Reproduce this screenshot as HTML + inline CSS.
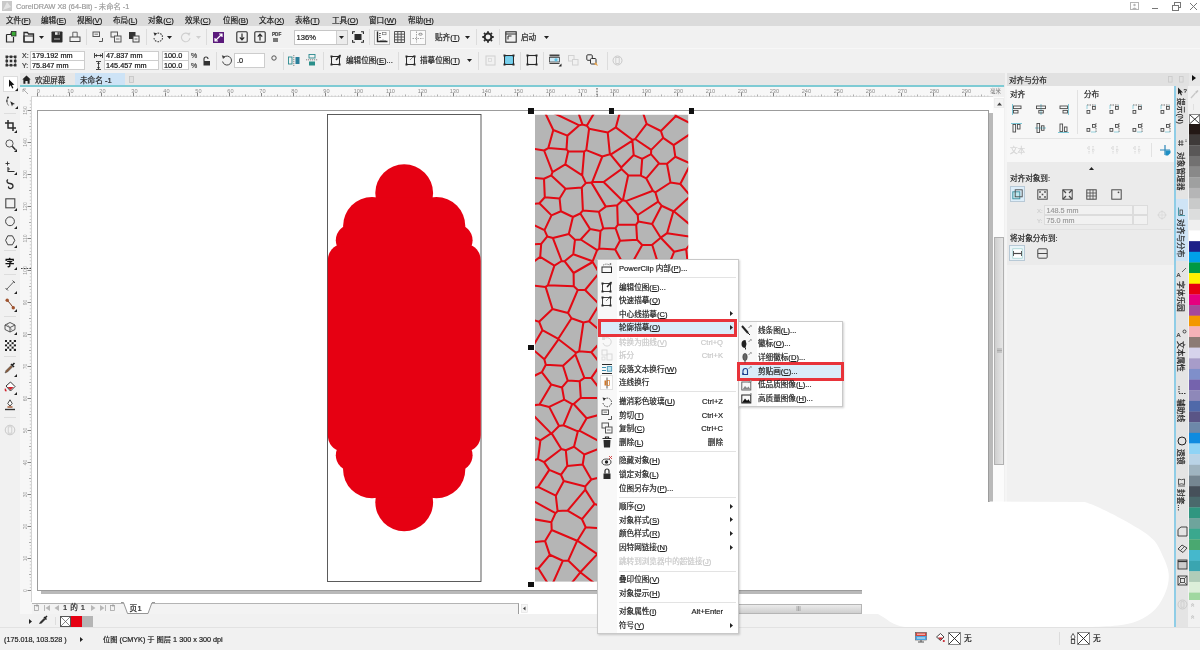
<!DOCTYPE html>
<html lang="zh-CN"><head><meta charset="utf-8"><title>CorelDRAW X8 (64-Bit) - 未命名 -1</title>
<style>
html,body{margin:0;padding:0;}
body{width:1200px;height:650px;overflow:hidden;position:relative;background:#f0f0f0;font-family:"Liberation Sans","Noto Sans CJK SC",sans-serif;}
#root{position:absolute;left:0;top:0;width:1200px;height:650px;overflow:hidden;will-change:transform;}
#root div,#root span.t,#root svg{position:absolute;}
#root div{box-sizing:border-box;}
span.t{white-space:nowrap;letter-spacing:0;-webkit-text-stroke:0.2px;}
u{text-decoration:underline;text-underline-offset:0.6px;text-decoration-thickness:0.5px;}
</style></head><body><div id="root">
<div style="left:0px;top:0px;width:1200px;height:13px;background:#ffffff;"></div>
<svg style="left:2px;top:1px;" width="10" height="10" viewBox="0 0 10 10"><rect x="0" y="0" width="10" height="10" fill="#c9c9c9"/><path d="M1 9 L5 1 L9 6 Z" fill="#e4e4e4"/></svg>
<span class="t" style="left:16px;top:1.00px;font-size:7.3px;line-height:12px;color:#9b9b9b;">CorelDRAW X8 (64-Bit) - 未命名 -1</span>
<svg style="left:1130px;top:2px;" width="10" height="9" viewBox="0 0 10 9"><rect x="0.5" y="0.5" width="8" height="7" fill="none" stroke="#b5b5b5"/><circle cx="4.5" cy="3" r="1.2" fill="#b5b5b5"/><path d="M2 7 Q4.5 4 7 7" fill="#b5b5b5"/></svg>
<div style="left:1152px;top:8px;width:6px;height:1px;background:#777;"></div>
<svg style="left:1172px;top:2px;" width="10" height="10" viewBox="0 0 10 10"><rect x="2.5" y="0.5" width="6" height="5" fill="none" stroke="#777"/><rect x="0.5" y="3.5" width="6" height="5" fill="#fff" stroke="#777"/></svg>
<svg style="left:1189px;top:2px;" width="9" height="9" viewBox="0 0 9 9"><path d="M1 1 L8 8 M8 1 L1 8" stroke="#777" stroke-width="1"/></svg>
<div style="left:0px;top:13px;width:1200px;height:13px;background:#dbdbdb;"></div>
<span class="t" style="left:6px;top:14.70px;font-size:7.6px;line-height:12px;color:#1e1e1e;">文件(<u>F</u>)</span>
<span class="t" style="left:41px;top:14.70px;font-size:7.6px;line-height:12px;color:#1e1e1e;">编辑(<u>E</u>)</span>
<span class="t" style="left:77px;top:14.70px;font-size:7.6px;line-height:12px;color:#1e1e1e;">视图(<u>V</u>)</span>
<span class="t" style="left:113px;top:14.70px;font-size:7.6px;line-height:12px;color:#1e1e1e;">布局(<u>L</u>)</span>
<span class="t" style="left:148px;top:14.70px;font-size:7.6px;line-height:12px;color:#1e1e1e;">对象(<u>C</u>)</span>
<span class="t" style="left:185px;top:14.70px;font-size:7.6px;line-height:12px;color:#1e1e1e;">效果(<u>C</u>)</span>
<span class="t" style="left:223px;top:14.70px;font-size:7.6px;line-height:12px;color:#1e1e1e;">位图(<u>B</u>)</span>
<span class="t" style="left:259px;top:14.70px;font-size:7.6px;line-height:12px;color:#1e1e1e;">文本(<u>X</u>)</span>
<span class="t" style="left:295px;top:14.70px;font-size:7.6px;line-height:12px;color:#1e1e1e;">表格(<u>T</u>)</span>
<span class="t" style="left:332px;top:14.70px;font-size:7.6px;line-height:12px;color:#1e1e1e;">工具(<u>O</u>)</span>
<span class="t" style="left:369px;top:14.70px;font-size:7.6px;line-height:12px;color:#1e1e1e;">窗口(<u>W</u>)</span>
<span class="t" style="left:408px;top:14.70px;font-size:7.6px;line-height:12px;color:#1e1e1e;">帮助(<u>H</u>)</span>
<div style="left:0px;top:26px;width:1200px;height:22px;background:#f1f1f1;"></div>
<div style="left:0px;top:48px;width:1200px;height:25px;background:#f1f1f1;"></div>
<svg style="left:5px;top:31px;" width="12" height="12" viewBox="0 0 12 12"><path d="M1.5 3.5 H6 V1.5 M1.5 3.5 V11 H8.5 V6" fill="none" stroke="#2b2b2b" stroke-width="1.2"/><rect x="6.5" y="0.5" width="4.5" height="4.5" fill="#3aaa35" stroke="#2b2b2b" stroke-width="0.8"/></svg>
<svg style="left:23px;top:31px;" width="12" height="12" viewBox="0 0 12 12"><path d="M1 11 V1.5 H4.5 L5.5 3 H10.5 V11 Z" fill="none" stroke="#2b2b2b" stroke-width="1.3"/><path d="M1 11 V5 H10.5" fill="none" stroke="#2b2b2b" stroke-width="1.1"/></svg>
<svg style="left:38.5px;top:35.5px;" width="5" height="3" viewBox="0 0 5 3"><path d="M0 0 H5 L2.5 3 Z" fill="#222"/></svg>
<svg style="left:51px;top:31px;" width="12" height="12" viewBox="0 0 12 12"><rect x="0.5" y="0.5" width="11" height="11" rx="0.8" fill="#2b2b2b"/><rect x="4" y="1.2" width="4.5" height="2.6" fill="#e8e8e8"/><rect x="6.6" y="1.2" width="1.2" height="2.6" fill="#2b2b2b"/><rect x="3" y="7.5" width="6" height="1" fill="#bdbdbd"/></svg>
<svg style="left:69px;top:31px;" width="12" height="12" viewBox="0 0 12 12"><path d="M3.8 6 V1.2 H8.2 V6" fill="none" stroke="#555" stroke-width="0.9"/><rect x="1" y="6" width="10" height="4.5" fill="none" stroke="#444" stroke-width="1"/></svg>
<div style="left:86px;top:29px;width:1px;height:16px;background:#dcdcdc;"></div>
<svg style="left:92px;top:31px;" width="12" height="12" viewBox="0 0 12 12"><rect x="1" y="1" width="6.5" height="4.5" fill="none" stroke="#555" stroke-width="1"/><path d="M2.5 3.2 H6" stroke="#555" stroke-width="0.8"/><path d="M7 10.5 H10.5 V7" fill="none" stroke="#555" stroke-width="1"/></svg>
<svg style="left:110px;top:31px;" width="12" height="12" viewBox="0 0 12 12"><rect x="1" y="1" width="6.5" height="5" fill="none" stroke="#555" stroke-width="1"/><rect x="4.5" y="5" width="6.5" height="6" fill="#f1f1f1" stroke="#555" stroke-width="1"/><path d="M6 8 H9.5" stroke="#555" stroke-width="0.8"/></svg>
<svg style="left:128px;top:31px;" width="12" height="12" viewBox="0 0 12 12"><rect x="1" y="1" width="6.5" height="7" fill="#333"/><rect x="5" y="5" width="6" height="6" fill="#f1f1f1" stroke="#444" stroke-width="1"/><path d="M6.5 8 H9.5" stroke="#444" stroke-width="0.8"/></svg>
<div style="left:146px;top:29px;width:1px;height:16px;background:#dcdcdc;"></div>
<svg style="left:152px;top:31px;" width="12" height="12" viewBox="0 0 12 12"><path d="M3.2 3.4 A4.3 4.3 0 1 1 2 7" fill="none" stroke="#444" stroke-width="1.1" stroke-dasharray="1.6 1"/><path d="M1.5 1.5 L5 2.2 L2.8 5 Z" fill="#333"/></svg>
<svg style="left:166.5px;top:35.5px;" width="5" height="3" viewBox="0 0 5 3"><path d="M0 0 H5 L2.5 3 Z" fill="#222"/></svg>
<svg style="left:180px;top:31px;" width="12" height="12" viewBox="0 0 12 12"><path d="M8.8 3.4 A4.3 4.3 0 1 0 10 7" fill="none" stroke="#cfcfcf" stroke-width="1.1"/><path d="M10.5 1.5 L7 2.2 L9.2 5 Z" fill="#cfcfcf"/></svg>
<svg style="left:195.5px;top:35.5px;" width="5" height="3" viewBox="0 0 5 3"><path d="M0 0 H5 L2.5 3 Z" fill="#cfcfcf"/></svg>
<div style="left:206px;top:29px;width:1px;height:16px;background:#dcdcdc;"></div>
<svg style="left:213px;top:32px;" width="11" height="11" viewBox="0 0 11 11"><rect width="11" height="11" fill="#5b1a7c"/><path d="M2 9 L9 2 M6 2 H9 V5 M2 6 V9 H5" stroke="#fff" stroke-width="1.2" fill="none"/></svg>
<svg style="left:236px;top:31px;" width="12" height="12" viewBox="0 0 12 12"><rect x="0.8" y="0.8" width="10.4" height="10.4" rx="1" fill="none" stroke="#2b2b2b" stroke-width="1.1"/><path d="M6 2.5 V8.5 M3.8 6.3 L6 8.8 L8.2 6.3" stroke="#2b2b2b" stroke-width="1.2" fill="none"/></svg>
<svg style="left:254px;top:31px;" width="12" height="12" viewBox="0 0 12 12"><rect x="0.8" y="0.8" width="10.4" height="10.4" rx="1" fill="none" stroke="#2b2b2b" stroke-width="1.1"/><path d="M6 9.5 V3.5 M3.8 5.7 L6 3.2 L8.2 5.7" stroke="#2b2b2b" stroke-width="1.2" fill="none"/></svg>
<span class="t" style="left:272px;top:32.20px;font-size:4.6px;line-height:6px;color:#444;font-weight:bold;">PDF</span>
<div style="left:273px;top:38px;width:5px;height:4px;background:#777;"></div>
<div style="left:294px;top:30px;width:54px;height:15px;background:#fff;border:1px solid #c6c6c6;"></div>
<div style="left:336px;top:31px;width:11px;height:13px;background:#ececec;border-left:1px solid #d0d0d0;"></div>
<span class="t" style="left:296.5px;top:32.20px;font-size:7.6px;line-height:12px;color:#222;">136%</span>
<svg style="left:339.0px;top:36.0px;" width="5" height="3" viewBox="0 0 5 3"><path d="M0 0 H5 L2.5 3 Z" fill="#222"/></svg>
<svg style="left:352px;top:31px;" width="12" height="12" viewBox="0 0 12 12"><rect x="2.5" y="3" width="7" height="6" fill="#2b2b2b"/><path d="M0.6 3 V0.8 H3 M9 0.8 H11.4 V3 M11.4 9 V11.2 H9 M3 11.2 H0.6 V9" fill="none" stroke="#2b2b2b" stroke-width="1.1"/></svg>
<div style="left:369px;top:29px;width:1px;height:16px;background:#dcdcdc;"></div>
<div style="left:374px;top:30px;width:16px;height:15px;background:#fafafa;border:1px solid #bdbdbd;"></div>
<svg style="left:376px;top:31px;" width="12" height="12" viewBox="0 0 12 12"><path d="M1.5 0.5 V10.5 H11.5" fill="none" stroke="#2b2b2b" stroke-width="1.4"/><path d="M3 2.5 H5 M3 4.5 H4.5 M3 6.5 H5 M5 9 V10 M7 8.5 V10 M9 9 V10" stroke="#2b2b2b" stroke-width="0.7"/><rect x="6.5" y="1.5" width="3.5" height="2.2" fill="none" stroke="#777" stroke-width="0.7"/></svg>
<svg style="left:394px;top:31px;" width="11" height="12" viewBox="0 0 11 12"><path d="M0.5 0.5 H10.5 V11.5 H0.5 Z M0.5 3.2 H10.5 M0.5 6 H10.5 M0.5 8.8 H10.5 M3.8 0.5 V11.5 M7.2 0.5 V11.5" fill="none" stroke="#555" stroke-width="1"/></svg>
<div style="left:410px;top:30px;width:16px;height:15px;background:#fafafa;border:1px solid #bdbdbd;"></div>
<svg style="left:412px;top:31px;" width="12" height="12" viewBox="0 0 12 12"><path d="M4.5 0.5 V11.5 M0.5 7.5 H11.5" stroke="#8a8a8a" stroke-width="0.8" stroke-dasharray="1.5 1"/><ellipse cx="8.5" cy="3.2" rx="1.8" ry="1" fill="none" stroke="#666" stroke-width="0.7"/></svg>
<span class="t" style="left:435px;top:32.20px;font-size:7.6px;line-height:12px;color:#222;">贴齐(<u>T</u>)</span>
<svg style="left:464.5px;top:36.0px;" width="5" height="3" viewBox="0 0 5 3"><path d="M0 0 H5 L2.5 3 Z" fill="#222"/></svg>
<div style="left:476px;top:29px;width:1px;height:16px;background:#dcdcdc;"></div>
<svg style="left:482px;top:31px;" width="12" height="12" viewBox="0 0 12 12"><circle cx="6" cy="6" r="3.4" fill="none" stroke="#2b2b2b" stroke-width="2"/><g stroke="#2b2b2b" stroke-width="1.8"><path d="M6 0.3 V2 M6 10 V11.7 M0.3 6 H2 M10 6 H11.7 M2 2 L3.2 3.2 M8.8 8.8 L10 10 M10 2 L8.8 3.2 M2 10 L3.2 8.8"/></g></svg>
<div style="left:499px;top:29px;width:1px;height:16px;background:#dcdcdc;"></div>
<svg style="left:505px;top:31px;" width="12" height="12" viewBox="0 0 12 12"><rect x="0.8" y="0.8" width="10.4" height="10.4" fill="none" stroke="#2b2b2b" stroke-width="1.1"/><path d="M0.8 3 H11.2" stroke="#2b2b2b" stroke-width="1"/><path d="M3 5 H6.5 M3 5 V8.5" stroke="#2b2b2b" stroke-width="1"/></svg>
<span class="t" style="left:521px;top:32.20px;font-size:7.6px;line-height:12px;color:#222;">启动</span>
<svg style="left:543.5px;top:36.0px;" width="5" height="3" viewBox="0 0 5 3"><path d="M0 0 H5 L2.5 3 Z" fill="#222"/></svg>
<div style="left:0px;top:48px;width:1200px;height:1px;background:#f7f7f7;"></div>
<svg style="left:5px;top:55px;" width="12" height="12" viewBox="0 0 12 12"><rect x="0.5" y="0.5" width="2.6" height="2.6" fill="#333"/><rect x="0.5" y="4.7" width="2.6" height="2.6" fill="#333"/><rect x="0.5" y="8.9" width="2.6" height="2.6" fill="#333"/><rect x="4.7" y="0.5" width="2.6" height="2.6" fill="#333"/><rect x="4.7" y="4.7" width="2.6" height="2.6" fill="#333"/><rect x="4.7" y="8.9" width="2.6" height="2.6" fill="#333"/><rect x="8.9" y="0.5" width="2.6" height="2.6" fill="#333"/><rect x="8.9" y="4.7" width="2.6" height="2.6" fill="#333"/><rect x="8.9" y="8.9" width="2.6" height="2.6" fill="#333"/><rect x="1.8" y="1.8" width="8.4" height="8.4" fill="none" stroke="#333" stroke-width="0.7"/></svg>
<span class="t" style="left:22px;top:49.90px;font-size:7px;line-height:12px;color:#333;">X:</span>
<span class="t" style="left:22px;top:59.60px;font-size:7px;line-height:12px;color:#333;">Y:</span>
<div style="left:29.5px;top:50.8px;width:55px;height:10.2px;background:#fff;border:1px solid #cdcdcd;"></div>
<span class="t" style="left:32.0px;top:50.30px;font-size:7.3px;line-height:12px;color:#111;">179.192 mm</span>
<div style="left:29.5px;top:60px;width:55px;height:10.2px;background:#fff;border:1px solid #cdcdcd;"></div>
<span class="t" style="left:32.0px;top:59.50px;font-size:7.3px;line-height:12px;color:#111;">75.847 mm</span>
<svg style="left:94px;top:52.5px;" width="9" height="5" viewBox="0 0 9 5"><path d="M0.5 0 V5 M8.5 0 V5 M1 2.5 H8" stroke="#333" stroke-width="0.9" fill="none"/><path d="M1 2.5 L3 1 V4 Z M8 2.5 L6 1 V4 Z" fill="#333"/></svg>
<svg style="left:96px;top:61px;" width="5" height="9" viewBox="0 0 5 9"><path d="M0 0.5 H5 M0 8.5 H5 M2.5 1 V8" stroke="#333" stroke-width="0.9" fill="none"/><path d="M2.5 1 L1 3 H4 Z M2.5 8 L1 6 H4 Z" fill="#333"/></svg>
<div style="left:103.5px;top:50.8px;width:55px;height:10.2px;background:#fff;border:1px solid #cdcdcd;"></div>
<span class="t" style="left:106.0px;top:50.30px;font-size:7.3px;line-height:12px;color:#111;">47.837 mm</span>
<div style="left:103.5px;top:60px;width:55px;height:10.2px;background:#fff;border:1px solid #cdcdcd;"></div>
<span class="t" style="left:106.0px;top:59.50px;font-size:7.3px;line-height:12px;color:#111;">145.457 mm</span>
<div style="left:161.5px;top:50.8px;width:27.5px;height:10.2px;background:#fff;border:1px solid #cdcdcd;"></div>
<span class="t" style="left:164.0px;top:50.30px;font-size:7.3px;line-height:12px;color:#111;">100.0</span>
<div style="left:161.5px;top:60px;width:27.5px;height:10.2px;background:#fff;border:1px solid #cdcdcd;"></div>
<span class="t" style="left:164.0px;top:59.50px;font-size:7.3px;line-height:12px;color:#111;">100.0</span>
<span class="t" style="left:191px;top:50.20px;font-size:7px;line-height:12px;color:#444;">%</span>
<span class="t" style="left:191px;top:60.20px;font-size:7px;line-height:12px;color:#444;">%</span>
<svg style="left:202px;top:56px;" width="9" height="10" viewBox="0 0 9 10"><path d="M2 5 V3 A2 2 0 0 1 6 3" fill="none" stroke="#333" stroke-width="1.1"/><rect x="1.5" y="5" width="6.5" height="4.5" fill="#333"/></svg>
<div style="left:216px;top:52px;width:1px;height:18px;background:#dcdcdc;"></div>
<svg style="left:221px;top:54px;" width="12" height="12" viewBox="0 0 12 12"><path d="M3 3.2 A4.5 4.5 0 1 1 1.6 7.5" fill="none" stroke="#444" stroke-width="1"/><path d="M0.8 1.2 L4.6 2.5 L2 5 Z" fill="#444"/></svg>
<div style="left:234px;top:53px;width:31px;height:15px;background:#fff;border:1px solid #cdcdcd;"></div>
<span class="t" style="left:237px;top:55.20px;font-size:7.3px;line-height:12px;color:#222;">.0</span>
<svg style="left:271px;top:55px;" width="6" height="6" viewBox="0 0 6 6"><circle cx="3" cy="3" r="2.2" fill="none" stroke="#444" stroke-width="0.9"/></svg>
<div style="left:283px;top:52px;width:1px;height:18px;background:#dcdcdc;"></div>
<svg style="left:288px;top:55px;" width="12" height="11" viewBox="0 0 12 11"><rect x="0.5" y="2" width="3.5" height="7" fill="none" stroke="#2a8a8f" stroke-width="0.9"/><rect x="7.5" y="2" width="4" height="7" fill="#2a7f9a"/><path d="M5.8 0 V11" stroke="#555" stroke-width="0.7" stroke-dasharray="1.2 0.8"/></svg>
<svg style="left:306px;top:54px;" width="12" height="12" viewBox="0 0 12 12"><rect x="3" y="0.5" width="6" height="3.5" fill="none" stroke="#2a8a8f" stroke-width="0.9"/><rect x="3" y="7.5" width="6" height="4" fill="#2a8f8a"/><path d="M0 5.8 H12" stroke="#555" stroke-width="0.7" stroke-dasharray="1.2 0.8"/></svg>
<div style="left:323px;top:52px;width:1px;height:18px;background:#dcdcdc;"></div>
<svg style="left:330px;top:54px;" width="12" height="12" viewBox="0 0 12 12"><rect x="1.5" y="2.5" width="8" height="8" fill="none" stroke="#2b2b2b" stroke-width="1"/><rect x="0.5" y="1.5" width="2" height="2" fill="#2b2b2b"/><rect x="8.5" y="1.5" width="2" height="2" fill="#2b2b2b"/><rect x="0.5" y="9.5" width="2" height="2" fill="#2b2b2b"/><rect x="8.5" y="9.5" width="2" height="2" fill="#2b2b2b"/><path d="M6 6 L10.5 1" stroke="#2b2b2b" stroke-width="1.4"/><rect x="5" y="1" width="7" height="2.5" fill="#f1f1f1" opacity="0"/></svg>
<span class="t" style="left:346px;top:55.20px;font-size:7.6px;line-height:12px;color:#222;">编辑位图(<u>E</u>)...</span>
<div style="left:398px;top:52px;width:1px;height:18px;background:#dcdcdc;"></div>
<svg style="left:405px;top:54px;" width="12" height="12" viewBox="0 0 12 12"><rect x="1.5" y="2.5" width="8" height="8" fill="none" stroke="#2b2b2b" stroke-width="1"/><rect x="0.5" y="1.5" width="2" height="2" fill="#2b2b2b"/><rect x="8.5" y="1.5" width="2" height="2" fill="#2b2b2b"/><rect x="0.5" y="9.5" width="2" height="2" fill="#2b2b2b"/><rect x="8.5" y="9.5" width="2" height="2" fill="#2b2b2b"/><path d="M5 6 L8 3 M8.5 1 L10 2.5" stroke="#666" stroke-width="0.8"/></svg>
<span class="t" style="left:420px;top:55.20px;font-size:7.6px;line-height:12px;color:#222;">描摹位图(<u>T</u>)</span>
<svg style="left:466.5px;top:59.0px;" width="5" height="3" viewBox="0 0 5 3"><path d="M0 0 H5 L2.5 3 Z" fill="#222"/></svg>
<div style="left:478px;top:52px;width:1px;height:18px;background:#dcdcdc;"></div>
<svg style="left:485px;top:55px;" width="11" height="11" viewBox="0 0 11 11"><rect x="1" y="1" width="9" height="9" fill="none" stroke="#d0d0d0" stroke-width="1"/><rect x="3.5" y="3.5" width="3" height="3" fill="none" stroke="#d8d8d8" stroke-width="0.8"/></svg>
<svg style="left:503px;top:54px;" width="12" height="12" viewBox="0 0 12 12"><rect x="1.5" y="1.5" width="9" height="9" fill="#5bc3e6" stroke="#2b2b2b" stroke-width="1"/><path d="M2 4 H10 M2 6 H10 M2 8 H10 M4 2 V10 M6 2 V10 M8 2 V10" stroke="#9bdcf2" stroke-width="0.6"/><rect x="0.5" y="0.5" width="2" height="2" fill="#2b2b2b"/><rect x="9.5" y="0.5" width="2" height="2" fill="#2b2b2b"/><rect x="0.5" y="9.5" width="2" height="2" fill="#2b2b2b"/><rect x="9.5" y="9.5" width="2" height="2" fill="#2b2b2b"/></svg>
<div style="left:520px;top:52px;width:1px;height:18px;background:#dcdcdc;"></div>
<svg style="left:526px;top:54px;" width="12" height="12" viewBox="0 0 12 12"><rect x="1.5" y="1.5" width="9" height="9" fill="none" stroke="#2b2b2b" stroke-width="1.1"/><rect x="0.5" y="0.5" width="2" height="2" fill="#2b2b2b"/><rect x="9.5" y="0.5" width="2" height="2" fill="#2b2b2b"/><rect x="0.5" y="9.5" width="2" height="2" fill="#2b2b2b"/><rect x="9.5" y="9.5" width="2" height="2" fill="#2b2b2b"/></svg>
<div style="left:543px;top:52px;width:1px;height:18px;background:#dcdcdc;"></div>
<svg style="left:549px;top:54px;" width="13" height="13" viewBox="0 0 13 13"><rect x="0.5" y="0.5" width="10" height="2" fill="#444"/><rect x="0.5" y="3.5" width="10" height="4.5" fill="#cfe8f5" stroke="#444" stroke-width="0.8"/><circle cx="7" cy="5.8" r="1.6" fill="#5bc3e6"/><path d="M0.5 9.5 H10.5" stroke="#444" stroke-width="1"/><path d="M12.5 9.5 V12.5 H9.5 Z" fill="#222"/></svg>
<svg style="left:568px;top:55px;" width="11" height="11" viewBox="0 0 11 11"><rect x="0.5" y="0.5" width="5.5" height="5.5" fill="none" stroke="#d2d2d2"/><rect x="4.5" y="4.5" width="5.5" height="5.5" fill="#f1f1f1" stroke="#d2d2d2"/></svg>
<svg style="left:586px;top:54px;" width="13" height="13" viewBox="0 0 13 13"><rect x="0.8" y="0.8" width="5.5" height="5.5" rx="1" fill="none" stroke="#333" stroke-width="1"/><rect x="4.5" y="4.5" width="5.5" height="5.5" rx="1" fill="#f1f1f1" stroke="#333" stroke-width="1"/><path d="M8 10 L12 12 L10 8 Z" fill="#e8a24a"/></svg>
<div style="left:607px;top:52px;width:1px;height:18px;background:#dcdcdc;"></div>
<svg style="left:612px;top:55px;" width="11" height="11" viewBox="0 0 11 11"><circle cx="5.5" cy="5.5" r="4.5" fill="none" stroke="#c8c8c8" stroke-width="1"/><rect x="3.8" y="2.5" width="3.4" height="6" fill="none" stroke="#c8c8c8" stroke-width="0.8"/></svg>
<div style="left:0px;top:73px;width:1200px;height:14px;background:#e7e7e7;"></div>
<div style="left:0px;top:73px;width:20px;height:600px;background:#f1f1f1;"></div>
<div style="left:75px;top:73px;width:50px;height:13px;background:#cde3f6;"></div>
<svg style="left:22px;top:75px;" width="9" height="9" viewBox="0 0 9 9"><path d="M0.3 4.6 L4.5 0.5 L8.7 4.6 H7.6 V8.8 H5.6 V6 H3.4 V8.8 H1.4 V4.6 Z" fill="#222"/></svg>
<span class="t" style="left:35px;top:74.70px;font-size:7.6px;line-height:12px;color:#222;">欢迎屏幕</span>
<span class="t" style="left:80px;top:74.70px;font-size:7.6px;line-height:12px;color:#222;">未命名 -1</span>
<svg style="left:128.5px;top:76px;" width="5" height="7" viewBox="0 0 5 7"><rect x="0.5" y="0.5" width="4" height="6" fill="#e0e0e0" stroke="#c4c4c4" stroke-width="0.8"/></svg>
<div style="left:20px;top:85px;width:984px;height:2px;background:#7ecbd4;"></div>
<div style="left:20px;top:87px;width:973px;height:10px;background:#f7f7f7;"></div>
<div style="left:20px;top:97px;width:12px;height:517px;background:#f7f7f7;"></div>
<svg style="left:22px;top:88px;" width="8" height="8" viewBox="0 0 8 8"><path d="M1 1 L6 6 M1 1 H4 M1 1 V4" stroke="#9a9a9a" stroke-width="0.8" fill="none"/></svg>
<svg style="left:0px;top:87px;" width="1004" height="10" viewBox="0 0 1004 10"><rect x="37.10" y="6" width="0.9" height="3.5" fill="#777"/><rect x="40.40" y="8.4" width="0.6" height="1.2" fill="#aaa"/><rect x="43.60" y="8.4" width="0.6" height="1.2" fill="#aaa"/><rect x="46.80" y="8.4" width="0.6" height="1.2" fill="#aaa"/><rect x="50.00" y="8.4" width="0.6" height="1.2" fill="#aaa"/><rect x="53.10" y="7.5" width="0.8" height="2" fill="#999"/><rect x="56.40" y="8.4" width="0.6" height="1.2" fill="#aaa"/><rect x="59.60" y="8.4" width="0.6" height="1.2" fill="#aaa"/><rect x="62.80" y="8.4" width="0.6" height="1.2" fill="#aaa"/><rect x="66.00" y="8.4" width="0.6" height="1.2" fill="#aaa"/><rect x="69.10" y="6" width="0.9" height="3.5" fill="#777"/><rect x="72.40" y="8.4" width="0.6" height="1.2" fill="#aaa"/><rect x="75.60" y="8.4" width="0.6" height="1.2" fill="#aaa"/><rect x="78.80" y="8.4" width="0.6" height="1.2" fill="#aaa"/><rect x="82.00" y="8.4" width="0.6" height="1.2" fill="#aaa"/><rect x="85.10" y="7.5" width="0.8" height="2" fill="#999"/><rect x="88.40" y="8.4" width="0.6" height="1.2" fill="#aaa"/><rect x="91.60" y="8.4" width="0.6" height="1.2" fill="#aaa"/><rect x="94.80" y="8.4" width="0.6" height="1.2" fill="#aaa"/><rect x="98.00" y="8.4" width="0.6" height="1.2" fill="#aaa"/><rect x="101.10" y="6" width="0.9" height="3.5" fill="#777"/><rect x="104.40" y="8.4" width="0.6" height="1.2" fill="#aaa"/><rect x="107.60" y="8.4" width="0.6" height="1.2" fill="#aaa"/><rect x="110.80" y="8.4" width="0.6" height="1.2" fill="#aaa"/><rect x="114.00" y="8.4" width="0.6" height="1.2" fill="#aaa"/><rect x="117.10" y="7.5" width="0.8" height="2" fill="#999"/><rect x="120.40" y="8.4" width="0.6" height="1.2" fill="#aaa"/><rect x="123.60" y="8.4" width="0.6" height="1.2" fill="#aaa"/><rect x="126.80" y="8.4" width="0.6" height="1.2" fill="#aaa"/><rect x="130.00" y="8.4" width="0.6" height="1.2" fill="#aaa"/><rect x="133.10" y="6" width="0.9" height="3.5" fill="#777"/><rect x="136.40" y="8.4" width="0.6" height="1.2" fill="#aaa"/><rect x="139.60" y="8.4" width="0.6" height="1.2" fill="#aaa"/><rect x="142.80" y="8.4" width="0.6" height="1.2" fill="#aaa"/><rect x="146.00" y="8.4" width="0.6" height="1.2" fill="#aaa"/><rect x="149.10" y="7.5" width="0.8" height="2" fill="#999"/><rect x="152.40" y="8.4" width="0.6" height="1.2" fill="#aaa"/><rect x="155.60" y="8.4" width="0.6" height="1.2" fill="#aaa"/><rect x="158.80" y="8.4" width="0.6" height="1.2" fill="#aaa"/><rect x="162.00" y="8.4" width="0.6" height="1.2" fill="#aaa"/><rect x="165.10" y="6" width="0.9" height="3.5" fill="#777"/><rect x="168.40" y="8.4" width="0.6" height="1.2" fill="#aaa"/><rect x="171.60" y="8.4" width="0.6" height="1.2" fill="#aaa"/><rect x="174.80" y="8.4" width="0.6" height="1.2" fill="#aaa"/><rect x="178.00" y="8.4" width="0.6" height="1.2" fill="#aaa"/><rect x="181.10" y="7.5" width="0.8" height="2" fill="#999"/><rect x="184.40" y="8.4" width="0.6" height="1.2" fill="#aaa"/><rect x="187.60" y="8.4" width="0.6" height="1.2" fill="#aaa"/><rect x="190.80" y="8.4" width="0.6" height="1.2" fill="#aaa"/><rect x="194.00" y="8.4" width="0.6" height="1.2" fill="#aaa"/><rect x="197.10" y="6" width="0.9" height="3.5" fill="#777"/><rect x="200.40" y="8.4" width="0.6" height="1.2" fill="#aaa"/><rect x="203.60" y="8.4" width="0.6" height="1.2" fill="#aaa"/><rect x="206.80" y="8.4" width="0.6" height="1.2" fill="#aaa"/><rect x="210.00" y="8.4" width="0.6" height="1.2" fill="#aaa"/><rect x="213.10" y="7.5" width="0.8" height="2" fill="#999"/><rect x="216.40" y="8.4" width="0.6" height="1.2" fill="#aaa"/><rect x="219.60" y="8.4" width="0.6" height="1.2" fill="#aaa"/><rect x="222.80" y="8.4" width="0.6" height="1.2" fill="#aaa"/><rect x="226.00" y="8.4" width="0.6" height="1.2" fill="#aaa"/><rect x="229.10" y="6" width="0.9" height="3.5" fill="#777"/><rect x="232.40" y="8.4" width="0.6" height="1.2" fill="#aaa"/><rect x="235.60" y="8.4" width="0.6" height="1.2" fill="#aaa"/><rect x="238.80" y="8.4" width="0.6" height="1.2" fill="#aaa"/><rect x="242.00" y="8.4" width="0.6" height="1.2" fill="#aaa"/><rect x="245.10" y="7.5" width="0.8" height="2" fill="#999"/><rect x="248.40" y="8.4" width="0.6" height="1.2" fill="#aaa"/><rect x="251.60" y="8.4" width="0.6" height="1.2" fill="#aaa"/><rect x="254.80" y="8.4" width="0.6" height="1.2" fill="#aaa"/><rect x="258.00" y="8.4" width="0.6" height="1.2" fill="#aaa"/><rect x="261.10" y="6" width="0.9" height="3.5" fill="#777"/><rect x="264.40" y="8.4" width="0.6" height="1.2" fill="#aaa"/><rect x="267.60" y="8.4" width="0.6" height="1.2" fill="#aaa"/><rect x="270.80" y="8.4" width="0.6" height="1.2" fill="#aaa"/><rect x="274.00" y="8.4" width="0.6" height="1.2" fill="#aaa"/><rect x="277.10" y="7.5" width="0.8" height="2" fill="#999"/><rect x="280.40" y="8.4" width="0.6" height="1.2" fill="#aaa"/><rect x="283.60" y="8.4" width="0.6" height="1.2" fill="#aaa"/><rect x="286.80" y="8.4" width="0.6" height="1.2" fill="#aaa"/><rect x="290.00" y="8.4" width="0.6" height="1.2" fill="#aaa"/><rect x="293.10" y="6" width="0.9" height="3.5" fill="#777"/><rect x="296.40" y="8.4" width="0.6" height="1.2" fill="#aaa"/><rect x="299.60" y="8.4" width="0.6" height="1.2" fill="#aaa"/><rect x="302.80" y="8.4" width="0.6" height="1.2" fill="#aaa"/><rect x="306.00" y="8.4" width="0.6" height="1.2" fill="#aaa"/><rect x="309.10" y="7.5" width="0.8" height="2" fill="#999"/><rect x="312.40" y="8.4" width="0.6" height="1.2" fill="#aaa"/><rect x="315.60" y="8.4" width="0.6" height="1.2" fill="#aaa"/><rect x="318.80" y="8.4" width="0.6" height="1.2" fill="#aaa"/><rect x="322.00" y="8.4" width="0.6" height="1.2" fill="#aaa"/><rect x="325.10" y="6" width="0.9" height="3.5" fill="#777"/><rect x="328.40" y="8.4" width="0.6" height="1.2" fill="#aaa"/><rect x="331.60" y="8.4" width="0.6" height="1.2" fill="#aaa"/><rect x="334.80" y="8.4" width="0.6" height="1.2" fill="#aaa"/><rect x="338.00" y="8.4" width="0.6" height="1.2" fill="#aaa"/><rect x="341.10" y="7.5" width="0.8" height="2" fill="#999"/><rect x="344.40" y="8.4" width="0.6" height="1.2" fill="#aaa"/><rect x="347.60" y="8.4" width="0.6" height="1.2" fill="#aaa"/><rect x="350.80" y="8.4" width="0.6" height="1.2" fill="#aaa"/><rect x="354.00" y="8.4" width="0.6" height="1.2" fill="#aaa"/><rect x="357.10" y="6" width="0.9" height="3.5" fill="#777"/><rect x="360.40" y="8.4" width="0.6" height="1.2" fill="#aaa"/><rect x="363.60" y="8.4" width="0.6" height="1.2" fill="#aaa"/><rect x="366.80" y="8.4" width="0.6" height="1.2" fill="#aaa"/><rect x="370.00" y="8.4" width="0.6" height="1.2" fill="#aaa"/><rect x="373.10" y="7.5" width="0.8" height="2" fill="#999"/><rect x="376.40" y="8.4" width="0.6" height="1.2" fill="#aaa"/><rect x="379.60" y="8.4" width="0.6" height="1.2" fill="#aaa"/><rect x="382.80" y="8.4" width="0.6" height="1.2" fill="#aaa"/><rect x="386.00" y="8.4" width="0.6" height="1.2" fill="#aaa"/><rect x="389.10" y="6" width="0.9" height="3.5" fill="#777"/><rect x="392.40" y="8.4" width="0.6" height="1.2" fill="#aaa"/><rect x="395.60" y="8.4" width="0.6" height="1.2" fill="#aaa"/><rect x="398.80" y="8.4" width="0.6" height="1.2" fill="#aaa"/><rect x="402.00" y="8.4" width="0.6" height="1.2" fill="#aaa"/><rect x="405.10" y="7.5" width="0.8" height="2" fill="#999"/><rect x="408.40" y="8.4" width="0.6" height="1.2" fill="#aaa"/><rect x="411.60" y="8.4" width="0.6" height="1.2" fill="#aaa"/><rect x="414.80" y="8.4" width="0.6" height="1.2" fill="#aaa"/><rect x="418.00" y="8.4" width="0.6" height="1.2" fill="#aaa"/><rect x="421.10" y="6" width="0.9" height="3.5" fill="#777"/><rect x="424.40" y="8.4" width="0.6" height="1.2" fill="#aaa"/><rect x="427.60" y="8.4" width="0.6" height="1.2" fill="#aaa"/><rect x="430.80" y="8.4" width="0.6" height="1.2" fill="#aaa"/><rect x="434.00" y="8.4" width="0.6" height="1.2" fill="#aaa"/><rect x="437.10" y="7.5" width="0.8" height="2" fill="#999"/><rect x="440.40" y="8.4" width="0.6" height="1.2" fill="#aaa"/><rect x="443.60" y="8.4" width="0.6" height="1.2" fill="#aaa"/><rect x="446.80" y="8.4" width="0.6" height="1.2" fill="#aaa"/><rect x="450.00" y="8.4" width="0.6" height="1.2" fill="#aaa"/><rect x="453.10" y="6" width="0.9" height="3.5" fill="#777"/><rect x="456.40" y="8.4" width="0.6" height="1.2" fill="#aaa"/><rect x="459.60" y="8.4" width="0.6" height="1.2" fill="#aaa"/><rect x="462.80" y="8.4" width="0.6" height="1.2" fill="#aaa"/><rect x="466.00" y="8.4" width="0.6" height="1.2" fill="#aaa"/><rect x="469.10" y="7.5" width="0.8" height="2" fill="#999"/><rect x="472.40" y="8.4" width="0.6" height="1.2" fill="#aaa"/><rect x="475.60" y="8.4" width="0.6" height="1.2" fill="#aaa"/><rect x="478.80" y="8.4" width="0.6" height="1.2" fill="#aaa"/><rect x="482.00" y="8.4" width="0.6" height="1.2" fill="#aaa"/><rect x="485.10" y="6" width="0.9" height="3.5" fill="#777"/><rect x="488.40" y="8.4" width="0.6" height="1.2" fill="#aaa"/><rect x="491.60" y="8.4" width="0.6" height="1.2" fill="#aaa"/><rect x="494.80" y="8.4" width="0.6" height="1.2" fill="#aaa"/><rect x="498.00" y="8.4" width="0.6" height="1.2" fill="#aaa"/><rect x="501.10" y="7.5" width="0.8" height="2" fill="#999"/><rect x="504.40" y="8.4" width="0.6" height="1.2" fill="#aaa"/><rect x="507.60" y="8.4" width="0.6" height="1.2" fill="#aaa"/><rect x="510.80" y="8.4" width="0.6" height="1.2" fill="#aaa"/><rect x="514.00" y="8.4" width="0.6" height="1.2" fill="#aaa"/><rect x="517.10" y="6" width="0.9" height="3.5" fill="#777"/><rect x="520.40" y="8.4" width="0.6" height="1.2" fill="#aaa"/><rect x="523.60" y="8.4" width="0.6" height="1.2" fill="#aaa"/><rect x="526.80" y="8.4" width="0.6" height="1.2" fill="#aaa"/><rect x="530.00" y="8.4" width="0.6" height="1.2" fill="#aaa"/><rect x="533.10" y="7.5" width="0.8" height="2" fill="#999"/><rect x="536.40" y="8.4" width="0.6" height="1.2" fill="#aaa"/><rect x="539.60" y="8.4" width="0.6" height="1.2" fill="#aaa"/><rect x="542.80" y="8.4" width="0.6" height="1.2" fill="#aaa"/><rect x="546.00" y="8.4" width="0.6" height="1.2" fill="#aaa"/><rect x="549.10" y="6" width="0.9" height="3.5" fill="#777"/><rect x="552.40" y="8.4" width="0.6" height="1.2" fill="#aaa"/><rect x="555.60" y="8.4" width="0.6" height="1.2" fill="#aaa"/><rect x="558.80" y="8.4" width="0.6" height="1.2" fill="#aaa"/><rect x="562.00" y="8.4" width="0.6" height="1.2" fill="#aaa"/><rect x="565.10" y="7.5" width="0.8" height="2" fill="#999"/><rect x="568.40" y="8.4" width="0.6" height="1.2" fill="#aaa"/><rect x="571.60" y="8.4" width="0.6" height="1.2" fill="#aaa"/><rect x="574.80" y="8.4" width="0.6" height="1.2" fill="#aaa"/><rect x="578.00" y="8.4" width="0.6" height="1.2" fill="#aaa"/><rect x="581.10" y="6" width="0.9" height="3.5" fill="#777"/><rect x="584.40" y="8.4" width="0.6" height="1.2" fill="#aaa"/><rect x="587.60" y="8.4" width="0.6" height="1.2" fill="#aaa"/><rect x="590.80" y="8.4" width="0.6" height="1.2" fill="#aaa"/><rect x="594.00" y="8.4" width="0.6" height="1.2" fill="#aaa"/><rect x="597.10" y="7.5" width="0.8" height="2" fill="#999"/><rect x="600.40" y="8.4" width="0.6" height="1.2" fill="#aaa"/><rect x="603.60" y="8.4" width="0.6" height="1.2" fill="#aaa"/><rect x="606.80" y="8.4" width="0.6" height="1.2" fill="#aaa"/><rect x="610.00" y="8.4" width="0.6" height="1.2" fill="#aaa"/><rect x="613.10" y="6" width="0.9" height="3.5" fill="#777"/><rect x="616.40" y="8.4" width="0.6" height="1.2" fill="#aaa"/><rect x="619.60" y="8.4" width="0.6" height="1.2" fill="#aaa"/><rect x="622.80" y="8.4" width="0.6" height="1.2" fill="#aaa"/><rect x="626.00" y="8.4" width="0.6" height="1.2" fill="#aaa"/><rect x="629.10" y="7.5" width="0.8" height="2" fill="#999"/><rect x="632.40" y="8.4" width="0.6" height="1.2" fill="#aaa"/><rect x="635.60" y="8.4" width="0.6" height="1.2" fill="#aaa"/><rect x="638.80" y="8.4" width="0.6" height="1.2" fill="#aaa"/><rect x="642.00" y="8.4" width="0.6" height="1.2" fill="#aaa"/><rect x="645.10" y="6" width="0.9" height="3.5" fill="#777"/><rect x="648.40" y="8.4" width="0.6" height="1.2" fill="#aaa"/><rect x="651.60" y="8.4" width="0.6" height="1.2" fill="#aaa"/><rect x="654.80" y="8.4" width="0.6" height="1.2" fill="#aaa"/><rect x="658.00" y="8.4" width="0.6" height="1.2" fill="#aaa"/><rect x="661.10" y="7.5" width="0.8" height="2" fill="#999"/><rect x="664.40" y="8.4" width="0.6" height="1.2" fill="#aaa"/><rect x="667.60" y="8.4" width="0.6" height="1.2" fill="#aaa"/><rect x="670.80" y="8.4" width="0.6" height="1.2" fill="#aaa"/><rect x="674.00" y="8.4" width="0.6" height="1.2" fill="#aaa"/><rect x="677.10" y="6" width="0.9" height="3.5" fill="#777"/><rect x="680.40" y="8.4" width="0.6" height="1.2" fill="#aaa"/><rect x="683.60" y="8.4" width="0.6" height="1.2" fill="#aaa"/><rect x="686.80" y="8.4" width="0.6" height="1.2" fill="#aaa"/><rect x="690.00" y="8.4" width="0.6" height="1.2" fill="#aaa"/><rect x="693.10" y="7.5" width="0.8" height="2" fill="#999"/><rect x="696.40" y="8.4" width="0.6" height="1.2" fill="#aaa"/><rect x="699.60" y="8.4" width="0.6" height="1.2" fill="#aaa"/><rect x="702.80" y="8.4" width="0.6" height="1.2" fill="#aaa"/><rect x="706.00" y="8.4" width="0.6" height="1.2" fill="#aaa"/><rect x="709.10" y="6" width="0.9" height="3.5" fill="#777"/><rect x="712.40" y="8.4" width="0.6" height="1.2" fill="#aaa"/><rect x="715.60" y="8.4" width="0.6" height="1.2" fill="#aaa"/><rect x="718.80" y="8.4" width="0.6" height="1.2" fill="#aaa"/><rect x="722.00" y="8.4" width="0.6" height="1.2" fill="#aaa"/><rect x="725.10" y="7.5" width="0.8" height="2" fill="#999"/><rect x="728.40" y="8.4" width="0.6" height="1.2" fill="#aaa"/><rect x="731.60" y="8.4" width="0.6" height="1.2" fill="#aaa"/><rect x="734.80" y="8.4" width="0.6" height="1.2" fill="#aaa"/><rect x="738.00" y="8.4" width="0.6" height="1.2" fill="#aaa"/><rect x="741.10" y="6" width="0.9" height="3.5" fill="#777"/><rect x="744.40" y="8.4" width="0.6" height="1.2" fill="#aaa"/><rect x="747.60" y="8.4" width="0.6" height="1.2" fill="#aaa"/><rect x="750.80" y="8.4" width="0.6" height="1.2" fill="#aaa"/><rect x="754.00" y="8.4" width="0.6" height="1.2" fill="#aaa"/><rect x="757.10" y="7.5" width="0.8" height="2" fill="#999"/><rect x="760.40" y="8.4" width="0.6" height="1.2" fill="#aaa"/><rect x="763.60" y="8.4" width="0.6" height="1.2" fill="#aaa"/><rect x="766.80" y="8.4" width="0.6" height="1.2" fill="#aaa"/><rect x="770.00" y="8.4" width="0.6" height="1.2" fill="#aaa"/><rect x="773.10" y="6" width="0.9" height="3.5" fill="#777"/><rect x="776.40" y="8.4" width="0.6" height="1.2" fill="#aaa"/><rect x="779.60" y="8.4" width="0.6" height="1.2" fill="#aaa"/><rect x="782.80" y="8.4" width="0.6" height="1.2" fill="#aaa"/><rect x="786.00" y="8.4" width="0.6" height="1.2" fill="#aaa"/><rect x="789.10" y="7.5" width="0.8" height="2" fill="#999"/><rect x="792.40" y="8.4" width="0.6" height="1.2" fill="#aaa"/><rect x="795.60" y="8.4" width="0.6" height="1.2" fill="#aaa"/><rect x="798.80" y="8.4" width="0.6" height="1.2" fill="#aaa"/><rect x="802.00" y="8.4" width="0.6" height="1.2" fill="#aaa"/><rect x="805.10" y="6" width="0.9" height="3.5" fill="#777"/><rect x="808.40" y="8.4" width="0.6" height="1.2" fill="#aaa"/><rect x="811.60" y="8.4" width="0.6" height="1.2" fill="#aaa"/><rect x="814.80" y="8.4" width="0.6" height="1.2" fill="#aaa"/><rect x="818.00" y="8.4" width="0.6" height="1.2" fill="#aaa"/><rect x="821.10" y="7.5" width="0.8" height="2" fill="#999"/><rect x="824.40" y="8.4" width="0.6" height="1.2" fill="#aaa"/><rect x="827.60" y="8.4" width="0.6" height="1.2" fill="#aaa"/><rect x="830.80" y="8.4" width="0.6" height="1.2" fill="#aaa"/><rect x="834.00" y="8.4" width="0.6" height="1.2" fill="#aaa"/><rect x="837.10" y="6" width="0.9" height="3.5" fill="#777"/><rect x="840.40" y="8.4" width="0.6" height="1.2" fill="#aaa"/><rect x="843.60" y="8.4" width="0.6" height="1.2" fill="#aaa"/><rect x="846.80" y="8.4" width="0.6" height="1.2" fill="#aaa"/><rect x="850.00" y="8.4" width="0.6" height="1.2" fill="#aaa"/><rect x="853.10" y="7.5" width="0.8" height="2" fill="#999"/><rect x="856.40" y="8.4" width="0.6" height="1.2" fill="#aaa"/><rect x="859.60" y="8.4" width="0.6" height="1.2" fill="#aaa"/><rect x="862.80" y="8.4" width="0.6" height="1.2" fill="#aaa"/><rect x="866.00" y="8.4" width="0.6" height="1.2" fill="#aaa"/><rect x="869.10" y="6" width="0.9" height="3.5" fill="#777"/><rect x="872.40" y="8.4" width="0.6" height="1.2" fill="#aaa"/><rect x="875.60" y="8.4" width="0.6" height="1.2" fill="#aaa"/><rect x="878.80" y="8.4" width="0.6" height="1.2" fill="#aaa"/><rect x="882.00" y="8.4" width="0.6" height="1.2" fill="#aaa"/><rect x="885.10" y="7.5" width="0.8" height="2" fill="#999"/><rect x="888.40" y="8.4" width="0.6" height="1.2" fill="#aaa"/><rect x="891.60" y="8.4" width="0.6" height="1.2" fill="#aaa"/><rect x="894.80" y="8.4" width="0.6" height="1.2" fill="#aaa"/><rect x="898.00" y="8.4" width="0.6" height="1.2" fill="#aaa"/><rect x="901.10" y="6" width="0.9" height="3.5" fill="#777"/><rect x="904.40" y="8.4" width="0.6" height="1.2" fill="#aaa"/><rect x="907.60" y="8.4" width="0.6" height="1.2" fill="#aaa"/><rect x="910.80" y="8.4" width="0.6" height="1.2" fill="#aaa"/><rect x="914.00" y="8.4" width="0.6" height="1.2" fill="#aaa"/><rect x="917.10" y="7.5" width="0.8" height="2" fill="#999"/><rect x="920.40" y="8.4" width="0.6" height="1.2" fill="#aaa"/><rect x="923.60" y="8.4" width="0.6" height="1.2" fill="#aaa"/><rect x="926.80" y="8.4" width="0.6" height="1.2" fill="#aaa"/><rect x="930.00" y="8.4" width="0.6" height="1.2" fill="#aaa"/><rect x="933.10" y="6" width="0.9" height="3.5" fill="#777"/><rect x="936.40" y="8.4" width="0.6" height="1.2" fill="#aaa"/><rect x="939.60" y="8.4" width="0.6" height="1.2" fill="#aaa"/><rect x="942.80" y="8.4" width="0.6" height="1.2" fill="#aaa"/><rect x="946.00" y="8.4" width="0.6" height="1.2" fill="#aaa"/><rect x="949.10" y="7.5" width="0.8" height="2" fill="#999"/><rect x="952.40" y="8.4" width="0.6" height="1.2" fill="#aaa"/><rect x="955.60" y="8.4" width="0.6" height="1.2" fill="#aaa"/><rect x="958.80" y="8.4" width="0.6" height="1.2" fill="#aaa"/><rect x="962.00" y="8.4" width="0.6" height="1.2" fill="#aaa"/><rect x="965.10" y="6" width="0.9" height="3.5" fill="#777"/><rect x="968.40" y="8.4" width="0.6" height="1.2" fill="#aaa"/><rect x="971.60" y="8.4" width="0.6" height="1.2" fill="#aaa"/><rect x="974.80" y="8.4" width="0.6" height="1.2" fill="#aaa"/><rect x="978.00" y="8.4" width="0.6" height="1.2" fill="#aaa"/><rect x="981.10" y="7.5" width="0.8" height="2" fill="#999"/><rect x="984.40" y="8.4" width="0.6" height="1.2" fill="#aaa"/><rect x="987.60" y="8.4" width="0.6" height="1.2" fill="#aaa"/><rect x="31" y="9.5" width="962" height="0.6" fill="#bdbdbd"/><text x="38.4" y="5.6" font-size="5.6" fill="#8c8c8c" text-anchor="middle" font-family="Liberation Sans, sans-serif">0</text><text x="70.4" y="5.6" font-size="5.6" fill="#8c8c8c" text-anchor="middle" font-family="Liberation Sans, sans-serif">10</text><text x="102.4" y="5.6" font-size="5.6" fill="#8c8c8c" text-anchor="middle" font-family="Liberation Sans, sans-serif">20</text><text x="134.4" y="5.6" font-size="5.6" fill="#8c8c8c" text-anchor="middle" font-family="Liberation Sans, sans-serif">30</text><text x="166.4" y="5.6" font-size="5.6" fill="#8c8c8c" text-anchor="middle" font-family="Liberation Sans, sans-serif">40</text><text x="198.4" y="5.6" font-size="5.6" fill="#8c8c8c" text-anchor="middle" font-family="Liberation Sans, sans-serif">50</text><text x="230.4" y="5.6" font-size="5.6" fill="#8c8c8c" text-anchor="middle" font-family="Liberation Sans, sans-serif">60</text><text x="262.4" y="5.6" font-size="5.6" fill="#8c8c8c" text-anchor="middle" font-family="Liberation Sans, sans-serif">70</text><text x="294.4" y="5.6" font-size="5.6" fill="#8c8c8c" text-anchor="middle" font-family="Liberation Sans, sans-serif">80</text><text x="326.4" y="5.6" font-size="5.6" fill="#8c8c8c" text-anchor="middle" font-family="Liberation Sans, sans-serif">90</text><text x="358.4" y="5.6" font-size="5.6" fill="#8c8c8c" text-anchor="middle" font-family="Liberation Sans, sans-serif">100</text><text x="390.4" y="5.6" font-size="5.6" fill="#8c8c8c" text-anchor="middle" font-family="Liberation Sans, sans-serif">110</text><text x="422.4" y="5.6" font-size="5.6" fill="#8c8c8c" text-anchor="middle" font-family="Liberation Sans, sans-serif">120</text><text x="454.4" y="5.6" font-size="5.6" fill="#8c8c8c" text-anchor="middle" font-family="Liberation Sans, sans-serif">130</text><text x="486.4" y="5.6" font-size="5.6" fill="#8c8c8c" text-anchor="middle" font-family="Liberation Sans, sans-serif">140</text><text x="518.4" y="5.6" font-size="5.6" fill="#8c8c8c" text-anchor="middle" font-family="Liberation Sans, sans-serif">150</text><text x="550.4" y="5.6" font-size="5.6" fill="#8c8c8c" text-anchor="middle" font-family="Liberation Sans, sans-serif">160</text><text x="582.4" y="5.6" font-size="5.6" fill="#8c8c8c" text-anchor="middle" font-family="Liberation Sans, sans-serif">170</text><text x="614.4" y="5.6" font-size="5.6" fill="#8c8c8c" text-anchor="middle" font-family="Liberation Sans, sans-serif">180</text><text x="646.4" y="5.6" font-size="5.6" fill="#8c8c8c" text-anchor="middle" font-family="Liberation Sans, sans-serif">190</text><text x="678.4" y="5.6" font-size="5.6" fill="#8c8c8c" text-anchor="middle" font-family="Liberation Sans, sans-serif">200</text><text x="710.4" y="5.6" font-size="5.6" fill="#8c8c8c" text-anchor="middle" font-family="Liberation Sans, sans-serif">210</text><text x="742.4" y="5.6" font-size="5.6" fill="#8c8c8c" text-anchor="middle" font-family="Liberation Sans, sans-serif">220</text><text x="774.4" y="5.6" font-size="5.6" fill="#8c8c8c" text-anchor="middle" font-family="Liberation Sans, sans-serif">230</text><text x="806.4" y="5.6" font-size="5.6" fill="#8c8c8c" text-anchor="middle" font-family="Liberation Sans, sans-serif">240</text><text x="838.4" y="5.6" font-size="5.6" fill="#8c8c8c" text-anchor="middle" font-family="Liberation Sans, sans-serif">250</text><text x="870.4" y="5.6" font-size="5.6" fill="#8c8c8c" text-anchor="middle" font-family="Liberation Sans, sans-serif">260</text><text x="902.4" y="5.6" font-size="5.6" fill="#8c8c8c" text-anchor="middle" font-family="Liberation Sans, sans-serif">270</text><text x="934.4" y="5.6" font-size="5.6" fill="#8c8c8c" text-anchor="middle" font-family="Liberation Sans, sans-serif">280</text><text x="966.4" y="5.6" font-size="5.6" fill="#8c8c8c" text-anchor="middle" font-family="Liberation Sans, sans-serif">290</text><text x="995.5" y="6" font-size="5.4" fill="#777" text-anchor="middle" font-family="Liberation Sans, Noto Sans CJK SC, sans-serif">毫米</text></svg>
<svg style="left:0px;top:0px;" width="32" height="603" viewBox="0 0 32 603"><rect x="27.5" y="590.10" width="3.5" height="0.9" fill="#777"/><rect x="29.8" y="587.00" width="1.2" height="0.6" fill="#aaa"/><rect x="29.8" y="583.80" width="1.2" height="0.6" fill="#aaa"/><rect x="29.8" y="580.60" width="1.2" height="0.6" fill="#aaa"/><rect x="29.8" y="577.40" width="1.2" height="0.6" fill="#aaa"/><rect x="29" y="574.10" width="2" height="0.8" fill="#999"/><rect x="29.8" y="571.00" width="1.2" height="0.6" fill="#aaa"/><rect x="29.8" y="567.80" width="1.2" height="0.6" fill="#aaa"/><rect x="29.8" y="564.60" width="1.2" height="0.6" fill="#aaa"/><rect x="29.8" y="561.40" width="1.2" height="0.6" fill="#aaa"/><rect x="27.5" y="558.10" width="3.5" height="0.9" fill="#777"/><rect x="29.8" y="555.00" width="1.2" height="0.6" fill="#aaa"/><rect x="29.8" y="551.80" width="1.2" height="0.6" fill="#aaa"/><rect x="29.8" y="548.60" width="1.2" height="0.6" fill="#aaa"/><rect x="29.8" y="545.40" width="1.2" height="0.6" fill="#aaa"/><rect x="29" y="542.10" width="2" height="0.8" fill="#999"/><rect x="29.8" y="539.00" width="1.2" height="0.6" fill="#aaa"/><rect x="29.8" y="535.80" width="1.2" height="0.6" fill="#aaa"/><rect x="29.8" y="532.60" width="1.2" height="0.6" fill="#aaa"/><rect x="29.8" y="529.40" width="1.2" height="0.6" fill="#aaa"/><rect x="27.5" y="526.10" width="3.5" height="0.9" fill="#777"/><rect x="29.8" y="523.00" width="1.2" height="0.6" fill="#aaa"/><rect x="29.8" y="519.80" width="1.2" height="0.6" fill="#aaa"/><rect x="29.8" y="516.60" width="1.2" height="0.6" fill="#aaa"/><rect x="29.8" y="513.40" width="1.2" height="0.6" fill="#aaa"/><rect x="29" y="510.10" width="2" height="0.8" fill="#999"/><rect x="29.8" y="507.00" width="1.2" height="0.6" fill="#aaa"/><rect x="29.8" y="503.80" width="1.2" height="0.6" fill="#aaa"/><rect x="29.8" y="500.60" width="1.2" height="0.6" fill="#aaa"/><rect x="29.8" y="497.40" width="1.2" height="0.6" fill="#aaa"/><rect x="27.5" y="494.10" width="3.5" height="0.9" fill="#777"/><rect x="29.8" y="491.00" width="1.2" height="0.6" fill="#aaa"/><rect x="29.8" y="487.80" width="1.2" height="0.6" fill="#aaa"/><rect x="29.8" y="484.60" width="1.2" height="0.6" fill="#aaa"/><rect x="29.8" y="481.40" width="1.2" height="0.6" fill="#aaa"/><rect x="29" y="478.10" width="2" height="0.8" fill="#999"/><rect x="29.8" y="475.00" width="1.2" height="0.6" fill="#aaa"/><rect x="29.8" y="471.80" width="1.2" height="0.6" fill="#aaa"/><rect x="29.8" y="468.60" width="1.2" height="0.6" fill="#aaa"/><rect x="29.8" y="465.40" width="1.2" height="0.6" fill="#aaa"/><rect x="27.5" y="462.10" width="3.5" height="0.9" fill="#777"/><rect x="29.8" y="459.00" width="1.2" height="0.6" fill="#aaa"/><rect x="29.8" y="455.80" width="1.2" height="0.6" fill="#aaa"/><rect x="29.8" y="452.60" width="1.2" height="0.6" fill="#aaa"/><rect x="29.8" y="449.40" width="1.2" height="0.6" fill="#aaa"/><rect x="29" y="446.10" width="2" height="0.8" fill="#999"/><rect x="29.8" y="443.00" width="1.2" height="0.6" fill="#aaa"/><rect x="29.8" y="439.80" width="1.2" height="0.6" fill="#aaa"/><rect x="29.8" y="436.60" width="1.2" height="0.6" fill="#aaa"/><rect x="29.8" y="433.40" width="1.2" height="0.6" fill="#aaa"/><rect x="27.5" y="430.10" width="3.5" height="0.9" fill="#777"/><rect x="29.8" y="427.00" width="1.2" height="0.6" fill="#aaa"/><rect x="29.8" y="423.80" width="1.2" height="0.6" fill="#aaa"/><rect x="29.8" y="420.60" width="1.2" height="0.6" fill="#aaa"/><rect x="29.8" y="417.40" width="1.2" height="0.6" fill="#aaa"/><rect x="29" y="414.10" width="2" height="0.8" fill="#999"/><rect x="29.8" y="411.00" width="1.2" height="0.6" fill="#aaa"/><rect x="29.8" y="407.80" width="1.2" height="0.6" fill="#aaa"/><rect x="29.8" y="404.60" width="1.2" height="0.6" fill="#aaa"/><rect x="29.8" y="401.40" width="1.2" height="0.6" fill="#aaa"/><rect x="27.5" y="398.10" width="3.5" height="0.9" fill="#777"/><rect x="29.8" y="395.00" width="1.2" height="0.6" fill="#aaa"/><rect x="29.8" y="391.80" width="1.2" height="0.6" fill="#aaa"/><rect x="29.8" y="388.60" width="1.2" height="0.6" fill="#aaa"/><rect x="29.8" y="385.40" width="1.2" height="0.6" fill="#aaa"/><rect x="29" y="382.10" width="2" height="0.8" fill="#999"/><rect x="29.8" y="379.00" width="1.2" height="0.6" fill="#aaa"/><rect x="29.8" y="375.80" width="1.2" height="0.6" fill="#aaa"/><rect x="29.8" y="372.60" width="1.2" height="0.6" fill="#aaa"/><rect x="29.8" y="369.40" width="1.2" height="0.6" fill="#aaa"/><rect x="27.5" y="366.10" width="3.5" height="0.9" fill="#777"/><rect x="29.8" y="363.00" width="1.2" height="0.6" fill="#aaa"/><rect x="29.8" y="359.80" width="1.2" height="0.6" fill="#aaa"/><rect x="29.8" y="356.60" width="1.2" height="0.6" fill="#aaa"/><rect x="29.8" y="353.40" width="1.2" height="0.6" fill="#aaa"/><rect x="29" y="350.10" width="2" height="0.8" fill="#999"/><rect x="29.8" y="347.00" width="1.2" height="0.6" fill="#aaa"/><rect x="29.8" y="343.80" width="1.2" height="0.6" fill="#aaa"/><rect x="29.8" y="340.60" width="1.2" height="0.6" fill="#aaa"/><rect x="29.8" y="337.40" width="1.2" height="0.6" fill="#aaa"/><rect x="27.5" y="334.10" width="3.5" height="0.9" fill="#777"/><rect x="29.8" y="331.00" width="1.2" height="0.6" fill="#aaa"/><rect x="29.8" y="327.80" width="1.2" height="0.6" fill="#aaa"/><rect x="29.8" y="324.60" width="1.2" height="0.6" fill="#aaa"/><rect x="29.8" y="321.40" width="1.2" height="0.6" fill="#aaa"/><rect x="29" y="318.10" width="2" height="0.8" fill="#999"/><rect x="29.8" y="315.00" width="1.2" height="0.6" fill="#aaa"/><rect x="29.8" y="311.80" width="1.2" height="0.6" fill="#aaa"/><rect x="29.8" y="308.60" width="1.2" height="0.6" fill="#aaa"/><rect x="29.8" y="305.40" width="1.2" height="0.6" fill="#aaa"/><rect x="27.5" y="302.10" width="3.5" height="0.9" fill="#777"/><rect x="29.8" y="299.00" width="1.2" height="0.6" fill="#aaa"/><rect x="29.8" y="295.80" width="1.2" height="0.6" fill="#aaa"/><rect x="29.8" y="292.60" width="1.2" height="0.6" fill="#aaa"/><rect x="29.8" y="289.40" width="1.2" height="0.6" fill="#aaa"/><rect x="29" y="286.10" width="2" height="0.8" fill="#999"/><rect x="29.8" y="283.00" width="1.2" height="0.6" fill="#aaa"/><rect x="29.8" y="279.80" width="1.2" height="0.6" fill="#aaa"/><rect x="29.8" y="276.60" width="1.2" height="0.6" fill="#aaa"/><rect x="29.8" y="273.40" width="1.2" height="0.6" fill="#aaa"/><rect x="27.5" y="270.10" width="3.5" height="0.9" fill="#777"/><rect x="29.8" y="267.00" width="1.2" height="0.6" fill="#aaa"/><rect x="29.8" y="263.80" width="1.2" height="0.6" fill="#aaa"/><rect x="29.8" y="260.60" width="1.2" height="0.6" fill="#aaa"/><rect x="29.8" y="257.40" width="1.2" height="0.6" fill="#aaa"/><rect x="29" y="254.10" width="2" height="0.8" fill="#999"/><rect x="29.8" y="251.00" width="1.2" height="0.6" fill="#aaa"/><rect x="29.8" y="247.80" width="1.2" height="0.6" fill="#aaa"/><rect x="29.8" y="244.60" width="1.2" height="0.6" fill="#aaa"/><rect x="29.8" y="241.40" width="1.2" height="0.6" fill="#aaa"/><rect x="27.5" y="238.10" width="3.5" height="0.9" fill="#777"/><rect x="29.8" y="235.00" width="1.2" height="0.6" fill="#aaa"/><rect x="29.8" y="231.80" width="1.2" height="0.6" fill="#aaa"/><rect x="29.8" y="228.60" width="1.2" height="0.6" fill="#aaa"/><rect x="29.8" y="225.40" width="1.2" height="0.6" fill="#aaa"/><rect x="29" y="222.10" width="2" height="0.8" fill="#999"/><rect x="29.8" y="219.00" width="1.2" height="0.6" fill="#aaa"/><rect x="29.8" y="215.80" width="1.2" height="0.6" fill="#aaa"/><rect x="29.8" y="212.60" width="1.2" height="0.6" fill="#aaa"/><rect x="29.8" y="209.40" width="1.2" height="0.6" fill="#aaa"/><rect x="27.5" y="206.10" width="3.5" height="0.9" fill="#777"/><rect x="29.8" y="203.00" width="1.2" height="0.6" fill="#aaa"/><rect x="29.8" y="199.80" width="1.2" height="0.6" fill="#aaa"/><rect x="29.8" y="196.60" width="1.2" height="0.6" fill="#aaa"/><rect x="29.8" y="193.40" width="1.2" height="0.6" fill="#aaa"/><rect x="29" y="190.10" width="2" height="0.8" fill="#999"/><rect x="29.8" y="187.00" width="1.2" height="0.6" fill="#aaa"/><rect x="29.8" y="183.80" width="1.2" height="0.6" fill="#aaa"/><rect x="29.8" y="180.60" width="1.2" height="0.6" fill="#aaa"/><rect x="29.8" y="177.40" width="1.2" height="0.6" fill="#aaa"/><rect x="27.5" y="174.10" width="3.5" height="0.9" fill="#777"/><rect x="29.8" y="171.00" width="1.2" height="0.6" fill="#aaa"/><rect x="29.8" y="167.80" width="1.2" height="0.6" fill="#aaa"/><rect x="29.8" y="164.60" width="1.2" height="0.6" fill="#aaa"/><rect x="29.8" y="161.40" width="1.2" height="0.6" fill="#aaa"/><rect x="29" y="158.10" width="2" height="0.8" fill="#999"/><rect x="29.8" y="155.00" width="1.2" height="0.6" fill="#aaa"/><rect x="29.8" y="151.80" width="1.2" height="0.6" fill="#aaa"/><rect x="29.8" y="148.60" width="1.2" height="0.6" fill="#aaa"/><rect x="29.8" y="145.40" width="1.2" height="0.6" fill="#aaa"/><rect x="27.5" y="142.10" width="3.5" height="0.9" fill="#777"/><rect x="29.8" y="139.00" width="1.2" height="0.6" fill="#aaa"/><rect x="29.8" y="135.80" width="1.2" height="0.6" fill="#aaa"/><rect x="29.8" y="132.60" width="1.2" height="0.6" fill="#aaa"/><rect x="29.8" y="129.40" width="1.2" height="0.6" fill="#aaa"/><rect x="29" y="126.10" width="2" height="0.8" fill="#999"/><rect x="29.8" y="123.00" width="1.2" height="0.6" fill="#aaa"/><rect x="29.8" y="119.80" width="1.2" height="0.6" fill="#aaa"/><rect x="29.8" y="116.60" width="1.2" height="0.6" fill="#aaa"/><rect x="29.8" y="113.40" width="1.2" height="0.6" fill="#aaa"/><rect x="27.5" y="110.10" width="3.5" height="0.9" fill="#777"/><rect x="29.8" y="107.00" width="1.2" height="0.6" fill="#aaa"/><rect x="29.8" y="103.80" width="1.2" height="0.6" fill="#aaa"/><rect x="29.8" y="100.60" width="1.2" height="0.6" fill="#aaa"/><rect x="31" y="97" width="0.6" height="505" fill="#bdbdbd"/><text transform="translate(26.6,590.5) rotate(-90)" font-size="5" fill="#9a9a9a" text-anchor="middle" font-family="Liberation Sans, sans-serif">0</text><text transform="translate(26.6,558.5) rotate(-90)" font-size="5" fill="#9a9a9a" text-anchor="middle" font-family="Liberation Sans, sans-serif">10</text><text transform="translate(26.6,526.5) rotate(-90)" font-size="5" fill="#9a9a9a" text-anchor="middle" font-family="Liberation Sans, sans-serif">20</text><text transform="translate(26.6,494.5) rotate(-90)" font-size="5" fill="#9a9a9a" text-anchor="middle" font-family="Liberation Sans, sans-serif">30</text><text transform="translate(26.6,462.5) rotate(-90)" font-size="5" fill="#9a9a9a" text-anchor="middle" font-family="Liberation Sans, sans-serif">40</text><text transform="translate(26.6,430.5) rotate(-90)" font-size="5" fill="#9a9a9a" text-anchor="middle" font-family="Liberation Sans, sans-serif">50</text><text transform="translate(26.6,398.5) rotate(-90)" font-size="5" fill="#9a9a9a" text-anchor="middle" font-family="Liberation Sans, sans-serif">60</text><text transform="translate(26.6,366.5) rotate(-90)" font-size="5" fill="#9a9a9a" text-anchor="middle" font-family="Liberation Sans, sans-serif">70</text><text transform="translate(26.6,334.5) rotate(-90)" font-size="5" fill="#9a9a9a" text-anchor="middle" font-family="Liberation Sans, sans-serif">80</text><text transform="translate(26.6,302.5) rotate(-90)" font-size="5" fill="#9a9a9a" text-anchor="middle" font-family="Liberation Sans, sans-serif">90</text><text transform="translate(26.6,270.5) rotate(-90)" font-size="5" fill="#9a9a9a" text-anchor="middle" font-family="Liberation Sans, sans-serif">100</text><text transform="translate(26.6,238.5) rotate(-90)" font-size="5" fill="#9a9a9a" text-anchor="middle" font-family="Liberation Sans, sans-serif">110</text><text transform="translate(26.6,206.5) rotate(-90)" font-size="5" fill="#9a9a9a" text-anchor="middle" font-family="Liberation Sans, sans-serif">120</text><text transform="translate(26.6,174.5) rotate(-90)" font-size="5" fill="#9a9a9a" text-anchor="middle" font-family="Liberation Sans, sans-serif">130</text><text transform="translate(26.6,142.5) rotate(-90)" font-size="5" fill="#9a9a9a" text-anchor="middle" font-family="Liberation Sans, sans-serif">140</text><text transform="translate(26.6,110.5) rotate(-90)" font-size="5" fill="#9a9a9a" text-anchor="middle" font-family="Liberation Sans, sans-serif">150</text><path d="M21 268.5 H31" stroke="#333" stroke-width="0.9" stroke-dasharray="1.6 1.2"/></svg>
<div style="left:1197px;top:87px;width:0px;height:0px;background:#000;"></div>
<svg style="left:596px;top:88px;" width="2" height="9" viewBox="0 0 2 9"><path d="M1 0 V9" stroke="#333" stroke-width="0.9" stroke-dasharray="1.6 1.2"/></svg>
<div style="left:3px;top:76px;width:15px;height:15.5px;background:#ffffff;border:1px solid #dcdcdc;"></div>
<svg style="left:7.5px;top:79px;" width="7" height="10.5" viewBox="0 0 7 10.5"><path d="M1 0.5 V8 L2.8 6.3 L4.2 9.6 L5.4 9 L4 5.9 L6.4 5.7 Z" fill="#111"/></svg>
<svg style="left:14.5px;top:88px;" width="3" height="3" viewBox="0 0 3 3"><path d="M3 0 V3 H0 Z" fill="#222"/></svg>
<svg style="left:5px;top:96px;" width="12" height="13" viewBox="0 0 12 13"><path d="M3.2 1 C1.2 3.5 1.6 7 3.6 9.5" fill="none" stroke="#555" stroke-width="0.9"/><circle cx="3" cy="1.4" r="0.9" fill="#2b2b2b"/><circle cx="1.9" cy="5" r="0.8" fill="#2b2b2b"/><path d="M5.2 5.2 L10 8 L7.8 8.5 L7 10.6 Z" fill="#2b2b2b"/></svg>
<svg style="left:14.5px;top:106px;" width="3" height="3" viewBox="0 0 3 3"><path d="M3 0 V3 H0 Z" fill="#222"/></svg>
<div style="left:4px;top:113px;width:12px;height:1px;background:#dddddd;"></div>
<svg style="left:5px;top:120px;" width="11" height="11" viewBox="0 0 11 11"><path d="M3 0 V8 H11 M0 3 H8 V11" fill="none" stroke="#2b2b2b" stroke-width="1.5"/></svg>
<svg style="left:14px;top:130px;" width="3" height="3" viewBox="0 0 3 3"><path d="M3 0 V3 H0 Z" fill="#222"/></svg>
<svg style="left:5px;top:138.5px;" width="11" height="12" viewBox="0 0 11 12"><circle cx="4.5" cy="4.5" r="3.6" fill="none" stroke="#555" stroke-width="1"/><path d="M7.2 7.2 L10.5 10.8" stroke="#2b2b2b" stroke-width="1.5"/></svg>
<svg style="left:14px;top:149px;" width="3" height="3" viewBox="0 0 3 3"><path d="M3 0 V3 H0 Z" fill="#222"/></svg>
<svg style="left:5px;top:161px;" width="11" height="12" viewBox="0 0 11 12"><path d="M2.5 0.5 V4.5 M0.5 2.5 H4.5" stroke="#2b2b2b" stroke-width="0.9"/><path d="M3 6 V10.5 H9.5" fill="none" stroke="#2b2b2b" stroke-width="1.1"/><path d="M3 8 H5" stroke="#2b2b2b" stroke-width="0.9"/></svg>
<svg style="left:14px;top:172px;" width="3" height="3" viewBox="0 0 3 3"><path d="M3 0 V3 H0 Z" fill="#222"/></svg>
<svg style="left:5px;top:178px;" width="11" height="12" viewBox="0 0 11 12"><path d="M3 1.5 C1 2.5 2 5.5 5 5.5 C8.5 5.5 9 9.5 6 10.5 C4 11 3 9.5 3.8 8.5" fill="none" stroke="#2b2b2b" stroke-width="1.3"/></svg>
<svg style="left:5px;top:198px;" width="11" height="11" viewBox="0 0 11 11"><rect x="0.8" y="0.8" width="9" height="9" fill="none" stroke="#444" stroke-width="1.1"/></svg>
<svg style="left:14px;top:208px;" width="3" height="3" viewBox="0 0 3 3"><path d="M3 0 V3 H0 Z" fill="#222"/></svg>
<svg style="left:5px;top:216px;" width="11" height="11" viewBox="0 0 11 11"><circle cx="5" cy="5.3" r="4.4" fill="none" stroke="#444" stroke-width="1"/></svg>
<svg style="left:14px;top:226px;" width="3" height="3" viewBox="0 0 3 3"><path d="M3 0 V3 H0 Z" fill="#222"/></svg>
<svg style="left:5px;top:234.5px;" width="11" height="11" viewBox="0 0 11 11"><path d="M2.8 0.8 H7.4 L9.8 5.3 L7.4 9.8 H2.8 L0.6 5.3 Z" fill="none" stroke="#444" stroke-width="1"/></svg>
<svg style="left:14px;top:244.5px;" width="3" height="3" viewBox="0 0 3 3"><path d="M3 0 V3 H0 Z" fill="#222"/></svg>
<div style="left:4px;top:250px;width:12px;height:1px;background:#dddddd;"></div>
<span class="t" style="left:5px;top:256.70px;font-size:9.5px;line-height:12px;color:#111;font-weight:bold;">字</span>
<svg style="left:14px;top:267px;" width="3" height="3" viewBox="0 0 3 3"><path d="M3 0 V3 H0 Z" fill="#222"/></svg>
<div style="left:4px;top:274px;width:12px;height:1px;background:#dddddd;"></div>
<svg style="left:5px;top:280px;" width="11" height="11" viewBox="0 0 11 11"><path d="M1.5 9.5 L9 1.5" stroke="#555" stroke-width="0.9"/><path d="M0.5 8 L3 10.5 M7.5 0.5 L10 3" stroke="#444" stroke-width="0.9"/></svg>
<svg style="left:14px;top:291px;" width="3" height="3" viewBox="0 0 3 3"><path d="M3 0 V3 H0 Z" fill="#222"/></svg>
<svg style="left:5px;top:298px;" width="11" height="12" viewBox="0 0 11 12"><path d="M2 2 L5.5 6 L8.5 10" stroke="#7a3b1e" stroke-width="1" fill="none"/><circle cx="2.2" cy="2.2" r="1.7" fill="#a0522d"/><circle cx="8.3" cy="9.8" r="1.7" fill="#a0522d"/></svg>
<svg style="left:14px;top:309px;" width="3" height="3" viewBox="0 0 3 3"><path d="M3 0 V3 H0 Z" fill="#222"/></svg>
<div style="left:4px;top:316px;width:12px;height:1px;background:#dddddd;"></div>
<svg style="left:4px;top:321px;" width="12" height="12" viewBox="0 0 12 12"><path d="M1 4 L6 1.5 L11 4 V8.5 L6 11 L1 8.5 Z M1 4 L6 6.5 L11 4 M6 6.5 V11" fill="none" stroke="#444" stroke-width="0.9"/><path d="M3 3 L8.5 9.5" stroke="#777" stroke-width="0.7"/></svg>
<svg style="left:14px;top:332px;" width="3" height="3" viewBox="0 0 3 3"><path d="M3 0 V3 H0 Z" fill="#222"/></svg>
<svg style="left:5px;top:340px;" width="11" height="11" viewBox="0 0 11 11"><rect x="0.0" y="0.0" width="2.2" height="2.2" fill="#222"/><rect x="0.0" y="2.2" width="2.2" height="2.2" fill="#fff"/><rect x="0.0" y="4.4" width="2.2" height="2.2" fill="#222"/><rect x="0.0" y="6.6" width="2.2" height="2.2" fill="#fff"/><rect x="0.0" y="8.8" width="2.2" height="2.2" fill="#222"/><rect x="2.2" y="0.0" width="2.2" height="2.2" fill="#fff"/><rect x="2.2" y="2.2" width="2.2" height="2.2" fill="#222"/><rect x="2.2" y="4.4" width="2.2" height="2.2" fill="#fff"/><rect x="2.2" y="6.6" width="2.2" height="2.2" fill="#222"/><rect x="2.2" y="8.8" width="2.2" height="2.2" fill="#fff"/><rect x="4.4" y="0.0" width="2.2" height="2.2" fill="#222"/><rect x="4.4" y="2.2" width="2.2" height="2.2" fill="#fff"/><rect x="4.4" y="4.4" width="2.2" height="2.2" fill="#222"/><rect x="4.4" y="6.6" width="2.2" height="2.2" fill="#fff"/><rect x="4.4" y="8.8" width="2.2" height="2.2" fill="#222"/><rect x="6.6" y="0.0" width="2.2" height="2.2" fill="#fff"/><rect x="6.6" y="2.2" width="2.2" height="2.2" fill="#222"/><rect x="6.6" y="4.4" width="2.2" height="2.2" fill="#fff"/><rect x="6.6" y="6.6" width="2.2" height="2.2" fill="#222"/><rect x="6.6" y="8.8" width="2.2" height="2.2" fill="#fff"/><rect x="8.8" y="0.0" width="2.2" height="2.2" fill="#222"/><rect x="8.8" y="2.2" width="2.2" height="2.2" fill="#fff"/><rect x="8.8" y="4.4" width="2.2" height="2.2" fill="#222"/><rect x="8.8" y="6.6" width="2.2" height="2.2" fill="#fff"/><rect x="8.8" y="8.8" width="2.2" height="2.2" fill="#222"/></svg>
<div style="left:4px;top:356px;width:12px;height:1px;background:#dddddd;"></div>
<svg style="left:4px;top:362.2px;" width="12" height="12" viewBox="0 0 12 12"><path d="M1 11 L2 8.5 L7 3.5 L8.5 5 L3.5 10 Z" fill="#8a5a3a" stroke="#444" stroke-width="0.5"/><path d="M7 2 L10 5 M8 3.5 L10.5 1" stroke="#222" stroke-width="1.6"/></svg>
<svg style="left:14px;top:374px;" width="3" height="3" viewBox="0 0 3 3"><path d="M3 0 V3 H0 Z" fill="#222"/></svg>
<svg style="left:4px;top:381px;" width="12" height="12" viewBox="0 0 12 12"><path d="M2 5 L6.5 1 L11 5.5 L6.5 10 Z" fill="#fff" stroke="#333" stroke-width="1"/><path d="M3.5 6 L6.5 9 L9.5 6 Z" fill="#d0202a"/><path d="M1 7 C0 9 1 10.5 2 10.5 C3 10.5 3 9 1 7 Z" fill="#d0202a"/></svg>
<svg style="left:14px;top:392px;" width="3" height="3" viewBox="0 0 3 3"><path d="M3 0 V3 H0 Z" fill="#222"/></svg>
<svg style="left:4px;top:399px;" width="12" height="12" viewBox="0 0 12 12"><path d="M6 0.8 L8.2 4.5 L6 7 L3.8 4.5 Z" fill="#fff" stroke="#333" stroke-width="0.9"/><path d="M1 10.5 H11" stroke="#333" stroke-width="1.4"/><path d="M3.5 8 H8.5" stroke="#a0522d" stroke-width="1.4"/></svg>
<div style="left:4px;top:417px;width:12px;height:1px;background:#dddddd;"></div>
<svg style="left:4px;top:424px;" width="12" height="12" viewBox="0 0 12 12"><circle cx="6" cy="6" r="4.8" fill="none" stroke="#c8c8c8" stroke-width="1"/><rect x="4.2" y="2.8" width="3.6" height="6.4" fill="none" stroke="#c8c8c8" stroke-width="0.8"/></svg>
<div style="left:32px;top:97px;width:961px;height:506px;background:#ffffff;"></div>
<div style="left:41px;top:113px;width:952px;height:481px;background:#b9b9b9;"></div>
<div style="left:37px;top:110px;width:952px;height:481px;background:#ffffff;border:1px solid #9c9c9c;"></div>
<svg style="left:0px;top:0px;" width="1200" height="650" viewBox="0 0 1200 650"><rect x="327.5" y="114.5" width="153.5" height="467" fill="#fff" stroke="#4a4a4a" stroke-width="0.9"/><g fill="#e60012"><circle cx="404.2" cy="193.1" r="28.9"/><circle cx="372.0" cy="226.0" r="28.9"/><circle cx="351.8" cy="240.2" r="16"/><circle cx="436.4" cy="226.0" r="28.9"/><circle cx="456.6" cy="240.2" r="16"/><circle cx="404.2" cy="502.3" r="28.9"/><circle cx="372.0" cy="469.4" r="28.9"/><circle cx="351.8" cy="455.2" r="16"/><circle cx="436.4" cy="469.4" r="28.9"/><circle cx="456.6" cy="455.2" r="16"/><rect x="327.8" y="244.7" width="152.9" height="206" rx="13" ry="16"/><rect x="345" y="222.7" width="118" height="250"/><rect x="380" y="197.7" width="48" height="300"/></g></svg>
<svg style="left:0px;top:0px;" width="1200" height="650" viewBox="0 0 1200 650"><defs><clipPath id="vc"><rect x="535" y="114.8" width="153.20000000000005" height="466.8"/></clipPath></defs><rect x="535" y="114.8" width="153.20000000000005" height="466.8" fill="#b5b5b5"/><path d="M642.1 14.0L675.9 116.0M699.4 127.8L675.9 116.0M318.6 563.7L538.4 568.5M538.4 568.5L550.7 588.0M699.4 127.8L673.6 145.1M903.7 131.1L690.7 163.6M673.6 145.1L675.3 156.7M690.7 163.6L675.3 156.7M631.5 446.5L629.4 470.6M631.5 446.5L655.3 461.2M629.4 470.6L644.3 476.4M655.3 461.2L644.3 476.4M667.4 454.4L698.8 471.7M667.4 454.4L662.6 460.0M662.6 460.0L672.2 485.7M698.8 471.7L680.0 485.0M680.0 485.0L672.2 485.7M712.9 435.9L670.6 442.3M670.6 442.3L667.4 454.4M796.5 396.0L683.6 399.7M792.0 375.6L680.3 379.0M680.3 379.0L677.1 386.6M683.6 399.7L677.1 386.6M712.9 435.9L680.7 411.8M683.6 399.7L680.7 411.8M839.5 206.7L690.5 196.0M690.7 163.6L680.3 184.0M690.5 196.0L680.3 184.0M583.4 322.5L579.2 351.2M583.4 322.5L571.5 318.3M571.5 318.3L558.3 338.8M576.0 352.7L579.2 351.2M576.0 352.7L558.5 339.3M558.5 339.3L558.3 338.8M589.0 321.3L603.9 333.8M602.9 339.5L603.9 333.8M602.9 339.5L591.3 352.2M591.3 352.2L579.2 351.2M589.0 321.3L583.4 322.5M600.7 364.2L591.3 377.9M600.7 364.2L591.3 352.2M584.4 377.8L591.3 377.9M575.3 354.4L584.4 377.8M575.3 354.4L576.0 352.7M544.3 359.3L545.8 364.8M563.0 365.7L545.8 364.8M563.0 365.7L575.3 354.4M544.3 359.3L558.5 339.3M542.4 330.2L558.3 338.8M542.4 330.2L531.7 348.4M531.7 348.4L544.3 359.3M432.6 351.0L531.7 348.4M539.1 321.7L542.4 330.2M539.1 321.7L432.0 291.3M340.8 118.8L544.1 150.5M352.8 162.3L544.0 178.8M544.0 178.8L551.3 175.4M551.3 175.4L552.5 172.1M544.1 150.5L552.5 172.1M675.9 116.0L660.9 131.0M673.6 145.1L663.2 137.9M660.9 131.0L663.2 137.9M580.8 397.7L579.7 381.2M580.8 397.7L573.7 404.0M573.7 404.0L572.2 404.1M572.2 404.1L564.2 399.6M564.2 399.6L562.0 387.4M562.0 387.4L567.7 380.6M567.7 380.6L579.7 381.2M601.1 390.7L591.3 377.9M601.1 390.7L598.3 397.9M598.3 397.9L580.8 397.7M584.4 377.8L579.7 381.2M563.4 425.3L572.2 404.1M563.4 425.3L577.8 431.4M579.4 430.7L577.8 431.4M579.4 430.7L586.6 418.3M586.6 418.3L573.7 404.0M559.0 426.0L563.4 425.3M559.0 426.0L549.2 406.9M549.2 406.9L564.2 399.6M551.3 384.6L562.0 387.4M551.3 384.6L539.5 404.5M539.5 404.5L549.2 406.9M563.0 365.7L567.7 380.6M551.3 384.6L541.8 372.2M541.8 372.2L545.8 364.8M574.0 446.8L584.3 454.5M574.0 446.8L565.8 450.3M565.8 450.3L567.3 465.9M567.3 465.9L582.7 464.5M584.3 454.5L582.7 464.5M606.7 445.6L606.8 445.3M606.8 445.3L579.4 430.7M606.7 445.6L584.3 454.5M577.8 431.4L574.0 446.8M551.7 433.4L561.3 449.0M561.3 449.0L565.8 450.3M559.0 426.0L551.7 433.4M613.6 438.3L627.3 412.0M613.6 438.3L599.6 414.8M601.6 409.4L599.6 414.8M601.6 409.4L624.1 405.8M624.1 405.8L627.3 412.0M586.6 418.3L599.6 414.8M606.8 445.3L613.8 440.0M613.8 440.0L613.6 438.3M598.3 397.9L601.6 409.4M577.1 540.8L551.7 530.0M577.1 540.8L568.2 560.6M562.8 560.8L549.8 554.8M562.8 560.8L568.2 560.6M549.8 554.8L545.1 541.1M545.1 541.1L551.7 530.0M538.4 568.5L549.8 554.8M550.7 588.0L562.8 560.8M322.9 559.6L545.1 541.1M607.0 528.8L585.7 527.2M607.0 528.8L609.1 508.4M585.7 527.2L582.0 519.2M582.0 519.2L594.5 504.0M594.5 504.0L609.1 508.4M613.8 440.0L630.9 445.3M631.5 446.5L630.9 445.3M629.4 470.6L614.5 481.0M606.7 445.6L605.6 475.9M614.5 481.0L605.6 475.9M582.7 464.5L591.3 479.5M605.6 475.9L591.3 479.5M608.9 531.3L607.1 550.6M608.9 531.3L624.5 530.5M607.1 550.6L619.3 554.7M619.3 554.7L631.1 545.0M631.1 545.0L624.5 530.5M644.0 558.4L637.4 546.4M644.0 558.4L630.3 569.0M619.3 554.7L630.3 569.0M631.1 545.0L637.4 546.4M649.0 558.6L644.0 558.4M630.3 569.0L629.9 571.4M629.9 571.4L661.7 594.9M649.0 558.6L662.6 583.3M662.6 583.3L661.7 594.9M624.5 576.7L629.9 571.4M637.7 685.7L624.5 576.7M644.3 476.4L644.6 477.3M672.2 485.7L670.6 487.2M655.3 461.2L662.6 460.0M670.6 487.2L662.3 487.8M644.6 477.3L662.3 487.8M669.7 500.3L656.1 512.2M669.7 500.3L679.1 512.2M656.1 512.2L673.1 522.8M679.1 512.2L677.3 520.1M673.1 522.8L677.3 520.1M670.6 487.2L669.7 500.3M692.3 504.4L679.1 512.2M680.0 485.0L692.3 504.4M600.7 364.2L612.9 365.3M601.1 390.7L605.1 389.1M612.9 365.3L612.7 379.4M605.1 389.1L612.7 379.4M624.1 405.8L625.5 398.1M605.1 389.1L625.5 398.1M654.3 402.1L658.6 393.3M654.3 402.1L630.4 392.1M658.6 393.3L650.1 378.2M650.1 378.2L633.4 382.2M633.4 382.2L630.6 387.5M630.4 392.1L630.6 387.5M612.7 379.4L630.6 387.5M625.5 398.1L630.4 392.1M627.3 412.0L642.6 416.8M630.9 445.3L637.8 438.9M637.8 438.9L642.6 416.8M646.3 178.4L652.9 190.8M646.3 178.4L659.0 163.4M670.5 182.5L655.4 192.4M670.5 182.5L667.0 163.7M652.9 190.8L655.4 192.4M659.0 163.4L667.0 163.7M675.3 156.7L667.0 163.7M680.3 184.0L670.5 182.5M629.7 267.3L642.2 245.0M629.7 267.3L625.3 267.4M625.3 267.4L615.2 249.6M637.1 239.7L620.0 240.7M637.1 239.7L642.2 245.0M620.0 240.7L615.2 249.6M617.8 224.8L636.2 224.6M636.2 224.6L637.1 239.7M615.5 228.0L617.8 224.8M615.5 228.0L620.0 240.7M585.1 290.0L599.2 272.9M585.1 290.0L597.8 302.9M614.1 276.4L599.2 272.9M614.1 276.4L614.6 284.3M597.8 302.9L614.6 284.3M551.5 215.4L539.4 203.2M551.5 215.4L560.9 211.3M560.9 211.3L559.6 198.5M559.6 198.5L544.8 197.2M544.8 197.2L539.4 203.2M544.5 230.1L551.5 215.4M544.5 230.1L499.4 208.7M499.4 208.7L539.4 203.2M551.3 175.4L565.6 188.8M565.6 188.8L559.6 198.5M544.0 178.8L544.8 197.2M599.2 248.6L615.2 249.6M599.2 248.6L597.1 250.2M592.7 262.0L599.2 272.9M592.7 262.0L592.6 261.3M614.1 276.4L625.3 267.4M592.6 261.3L597.1 250.2M592.7 262.0L573.6 273.0M573.6 273.0L564.5 261.2M564.5 261.2L573.3 254.2M592.6 261.3L573.3 254.2M617.8 224.8L617.2 205.3M605.8 206.6L617.2 205.3M615.5 228.0L603.3 228.4M605.8 206.6L598.9 211.8M598.9 211.8L603.3 228.4M599.2 248.6L600.5 231.0M603.3 228.4L600.5 231.0M554.4 265.6L561.7 261.0M554.4 265.6L540.2 256.9M561.7 261.0L552.9 238.1M540.2 256.9L541.2 243.8M541.2 243.8L547.3 236.4M547.3 236.4L552.9 238.1M505.1 282.2L540.2 256.9M409.2 252.0L541.2 243.8M544.5 230.1L547.3 236.4M577.8 289.9L573.8 286.2M577.8 289.9L568.0 313.0M573.8 286.2L547.9 285.3M568.0 313.0L552.5 309.0M552.5 309.0L545.6 286.9M545.6 286.9L547.9 285.3M585.1 290.0L577.8 289.9M573.6 273.0L573.8 286.2M589.0 321.3L598.5 305.7M598.5 305.7L597.8 302.9M571.5 318.3L568.0 313.0M564.5 261.2L561.7 261.0M554.4 265.6L547.9 285.3M539.1 321.7L552.5 309.0M505.1 282.2L545.6 286.9M542.7 107.8L553.3 130.0M544.1 150.5L548.3 148.1M553.3 130.0L548.3 148.1M553.3 130.0L567.4 135.6M548.3 148.1L566.5 149.4M567.4 135.6L566.5 149.4M542.7 107.8L579.3 125.3M567.4 135.6L579.3 125.3M565.3 164.4L552.5 172.1M565.3 164.4L568.2 151.2M568.2 151.2L566.5 149.4M540.1 2.9L582.5 124.6M582.5 124.6L579.3 125.3M660.9 131.0L646.6 123.8M663.2 137.9L651.2 149.9M646.6 123.8L635.1 139.0M635.1 139.0L651.2 149.9M659.0 163.4L651.0 154.2M651.0 154.2L651.2 149.9M540.4 440.4L551.1 433.4M540.4 440.4L464.5 403.3M551.1 433.4L524.6 406.5M561.3 449.0L544.1 462.1M538.0 459.1L544.1 462.1M551.7 433.4L551.1 433.4M538.0 459.1L540.4 440.4M539.5 404.5L524.6 406.5M541.8 372.2L481.6 401.3M597.3 554.1L580.3 572.2M597.3 554.1L604.0 553.2M604.0 553.2L607.5 578.0M580.3 572.3L580.3 572.2M580.3 572.3L598.8 586.7M598.8 586.7L607.5 578.0M577.4 540.7L577.1 540.8M577.4 540.7L597.3 554.1M568.2 560.6L580.3 572.2M577.4 540.7L585.7 527.2M608.9 531.3L607.0 528.8M607.1 550.6L604.0 553.2M624.5 576.7L607.5 578.0M554.0 605.1L580.3 572.3M594.5 504.0L585.3 489.6M582.0 519.2L567.6 510.6M567.6 510.6L585.3 489.6M551.4 522.2L555.5 513.2M551.4 522.2L383.2 493.5M555.5 513.2L517.6 492.2M551.7 530.0L551.4 522.2M567.6 510.6L557.6 511.1M557.6 511.1L555.5 513.2M538.0 459.1L416.6 488.7M614.5 481.0L617.3 488.7M585.3 489.6L585.3 486.4M591.3 479.5L585.3 486.4M609.1 508.4L612.2 505.7M612.2 505.7L617.3 488.7M644.6 477.3L638.1 494.8M617.3 488.7L638.1 494.8M662.3 487.8L643.3 502.9M638.1 494.8L643.3 502.9M650.8 532.6L645.5 534.4M650.8 532.6L649.4 512.8M645.5 534.4L628.3 527.9M628.3 527.9L633.6 513.8M633.6 513.8L643.7 508.5M649.4 512.8L643.7 508.5M653.1 534.1L654.4 553.8M649.0 558.6L654.4 553.8M637.4 546.4L645.5 534.4M653.1 534.1L650.8 532.6M653.1 534.1L668.8 533.9M668.8 533.9L673.1 522.8M656.1 512.2L649.4 512.8M624.5 530.5L628.3 527.9M612.2 505.7L633.6 513.8M643.3 502.9L643.7 508.5M677.3 520.1L705.4 533.2M692.3 504.4L771.2 523.8M664.9 607.1L697.6 570.8M680.3 379.0L674.2 364.6M650.1 378.2L652.8 369.8M677.1 386.6L658.6 393.3M652.8 369.8L674.2 364.6M745.2 346.7L676.6 354.9M674.2 364.6L676.6 354.9M633.4 382.2L628.9 368.5M652.8 369.8L646.5 361.9M628.9 368.5L646.5 361.9M612.9 365.3L619.0 361.4M628.9 368.5L619.0 361.4M602.9 339.5L620.2 356.7M620.2 356.7L619.0 361.4M676.2 413.6L654.7 409.7M676.2 413.6L669.9 441.3M669.9 441.3L662.2 436.2M662.2 436.2L653.8 411.2M654.7 409.7L653.8 411.2M680.7 411.8L676.2 413.6M654.3 402.1L654.7 409.7M670.6 442.3L669.9 441.3M637.8 438.9L662.2 436.2M642.6 416.8L653.8 411.2M673.8 211.2L673.4 211.3M673.8 211.2L701.5 234.2M673.4 211.3L667.1 233.2M667.1 233.2L695.6 237.4M690.5 196.0L673.8 211.2M705.3 278.7L688.2 267.1M688.2 267.1L686.2 249.1M686.2 249.1L695.6 237.4M658.2 201.6L637.7 215.0M658.2 201.6L661.6 205.7M661.6 205.7L652.1 224.0M652.1 224.0L638.3 221.6M638.3 221.6L637.7 215.0M655.4 192.4L658.2 201.6M625.9 201.1L652.9 190.8M625.9 201.1L637.7 215.0M673.4 211.3L661.6 205.7M617.2 205.3L622.3 200.4M622.9 200.3L622.3 200.4M636.2 224.6L638.3 221.6M622.9 200.3L625.9 201.1M674.1 251.8L669.6 262.8M674.1 251.8L660.8 237.7M652.2 244.8L658.2 263.8M652.2 244.8L660.7 237.7M658.2 263.8L669.6 262.8M660.7 237.7L660.8 237.7M675.6 268.6L688.2 267.1M675.6 268.6L669.6 262.8M686.2 249.1L674.1 251.8M667.1 233.2L660.8 237.7M642.2 245.0L652.2 244.8M642.9 276.0L650.3 274.9M650.3 274.9L658.2 263.8M629.7 267.3L642.9 276.0M652.1 224.0L660.7 237.7M572.9 217.0L580.3 213.5M572.9 217.0L568.8 234.1M580.3 213.5L590.1 229.1M590.1 229.1L580.7 239.5M568.8 234.1L575.0 239.7M580.7 239.5L575.0 239.7M565.6 188.8L581.8 187.4M581.8 187.4L582.9 210.4M560.9 211.3L572.9 217.0M582.9 210.4L580.3 213.5M552.9 238.1L568.8 234.1M598.9 211.8L582.9 210.4M600.5 231.0L590.1 229.1M597.1 250.2L580.7 239.5M573.3 254.2L575.0 239.7M582.5 124.6L586.8 125.7M586.8 125.7L629.4 52.8M635.1 139.0L632.7 140.0M632.7 140.0L615.8 127.4M646.6 123.8L630.4 74.0M615.8 127.4L630.4 74.0M586.8 125.7L589.1 128.7M615.8 127.4L607.7 132.5M607.7 132.5L589.1 128.7M591.3 182.4L592.3 181.9M591.3 182.4L585.8 183.1M592.3 181.9L602.3 156.5M585.8 183.1L582.2 175.4M582.2 175.4L584.2 151.5M602.3 156.5L586.3 150.1M584.2 151.5L586.3 150.1M622.3 200.4L603.6 182.0M605.8 206.6L591.3 182.4M603.6 182.0L592.3 181.9M581.8 187.4L585.8 183.1M565.3 164.4L582.2 175.4M568.2 151.2L584.2 151.5M609.9 154.3L602.3 156.5M609.9 154.3L607.7 132.5M589.1 128.7L586.3 150.1M603.6 182.0L621.5 169.1M622.9 200.3L628.2 175.3M621.5 169.1L628.2 175.3M646.3 178.4L640.9 175.6M651.0 154.2L642.2 158.9M642.2 158.9L640.9 175.6M628.2 175.3L640.9 175.6M538.1 486.9L555.8 495.7M538.1 486.9L549.3 469.9M555.8 495.7L563.8 481.0M549.3 469.9L560.9 474.8M560.9 474.8L563.8 481.0M517.6 492.2L538.1 486.9M557.6 511.1L555.8 495.7M544.1 462.1L549.3 469.9M585.3 486.4L563.8 481.0M567.3 465.9L560.9 474.8M675.1 544.3L664.0 553.4M675.1 544.3L681.7 546.7M681.7 546.7L684.4 562.0M664.0 553.4L670.9 569.5M670.9 569.5L684.4 562.0M668.8 533.9L675.1 544.3M654.4 553.8L664.0 553.4M705.4 533.2L681.7 546.7M697.6 570.8L684.4 562.0M662.6 583.3L670.9 569.5M620.2 356.7L632.1 342.8M645.8 352.1L646.5 361.9M645.8 352.1L637.9 343.5M637.9 343.5L632.1 342.8M603.9 333.8L610.4 331.0M610.4 331.0L631.1 341.1M631.1 341.1L632.1 342.8M624.8 298.3L615.8 311.1M624.8 298.3L638.3 298.1M631.3 320.5L630.6 320.9M631.3 320.5L639.8 299.9M630.6 320.9L617.8 316.1M615.8 311.1L617.8 316.1M638.3 298.1L639.8 299.9M598.5 305.7L615.8 311.1M614.6 284.3L624.8 298.3M642.9 276.0L638.3 298.1M610.4 331.0L617.8 316.1M631.1 341.1L630.6 320.9M705.3 278.7L681.2 290.7M675.6 268.6L672.6 281.5M672.6 281.5L681.2 290.7M650.3 274.9L659.1 282.0M672.6 281.5L659.1 282.0M610.6 154.7L621.2 167.5M610.6 154.7L632.4 140.7M621.2 167.5L633.7 155.1M632.4 140.7L633.7 155.1M609.9 154.3L610.6 154.7M621.5 169.1L621.2 167.5M632.7 140.0L632.4 140.7M642.2 158.9L633.7 155.1M745.2 346.7L682.2 330.5M676.6 354.9L673.5 349.1M682.2 330.5L673.5 349.1M637.9 343.5L655.0 326.2M631.3 320.5L655.5 322.4M655.0 326.2L655.5 322.4M645.8 352.1L668.6 346.8M655.0 326.2L668.6 346.8M668.6 346.8L673.5 349.1M653.0 306.4L659.9 300.6M653.0 306.4L655.5 322.3M659.9 300.6L678.2 300.0M655.5 322.3L679.4 319.7M678.2 300.0L683.9 312.1M683.9 312.1L679.4 319.7M639.8 299.9L653.0 306.4M659.1 282.0L659.9 300.6M655.5 322.4L655.5 322.3M681.2 290.7L678.2 300.0M682.2 330.5L679.4 319.7M793.7 310.9L683.9 312.1" stroke="#e20a14" stroke-width="2.05" stroke-linecap="round" fill="none" clip-path="url(#vc)"/></svg>
<div style="left:528.3px;top:108.3px;width:5.5px;height:5.5px;background:#111;"></div>
<div style="left:608.8px;top:108.3px;width:5.5px;height:5.5px;background:#111;"></div>
<div style="left:688.8px;top:108.3px;width:5.5px;height:5.5px;background:#111;"></div>
<div style="left:528.3px;top:344.8px;width:5.5px;height:5.5px;background:#111;"></div>
<div style="left:528.0999999999999px;top:581.8px;width:5.5px;height:5.5px;background:#111;"></div>
<div style="left:993px;top:97px;width:11px;height:505px;background:#fbfbfb;"></div>
<div style="left:994px;top:98px;width:10px;height:10px;background:#f3f3f3;border:1px solid #ececec;"></div>
<svg style="left:995.5px;top:100.5px;" width="7" height="6" viewBox="0 0 7 6"><path d="M3.5 1.5 L6 4.5 H1 Z" fill="#444"/></svg>
<div style="left:994px;top:237px;width:10px;height:228px;background:linear-gradient(90deg,#cfcfcf,#e6e6e6);border:1px solid #b0b0b0;"></div>
<svg style="left:996.5px;top:348px;" width="5" height="5" viewBox="0 0 5 5"><path d="M0 1 H5 M0 2.5 H5 M0 4 H5" stroke="#888" stroke-width="0.6"/></svg>
<div style="left:32px;top:602px;width:972px;height:12px;background:#ffffff;"></div>
<div style="left:20px;top:614px;width:984px;height:1px;background:#f1f1f1;"></div>
<div style="left:32px;top:603px;width:487px;height:11px;background:#f3f3f3;border-top:1px solid #b4b4b4;border-right:1px solid #9c9c9c;"></div>
<svg style="left:521px;top:604px;" width="7" height="9" viewBox="0 0 7 9"><rect x="0.5" y="0.5" width="6" height="8" fill="#f6f6f6" stroke="#e0e0e0" stroke-width="0.6"/><path d="M4.5 2.5 V6.5 L2 4.5 Z" fill="#444"/></svg>
<div style="left:738px;top:603.5px;width:124px;height:10px;background:linear-gradient(180deg,#ebebeb,#cfcfcf);border:1px solid #b5b5b5;"></div>
<svg style="left:796px;top:606px;" width="5" height="5" viewBox="0 0 5 5"><path d="M1 0 V5 M2.5 0 V5 M4 0 V5" stroke="#888" stroke-width="0.6"/></svg>
<svg style="left:34px;top:604px;" width="6" height="7" viewBox="0 0 6 7"><rect x="0.5" y="1.5" width="4" height="5" fill="none" stroke="#999" stroke-width="0.7"/><path d="M3 0 V3 M1.5 1.5 H4.5" stroke="#999" stroke-width="0.7"/></svg>
<svg style="left:44px;top:604.5px;" width="7" height="6" viewBox="0 0 7 6"><path d="M0.5 0 V6" stroke="#b8b8b8" stroke-width="1"/><path d="M6 0 V6 L1.5 3 Z" fill="#b8b8b8"/></svg>
<svg style="left:54px;top:604.5px;" width="6" height="6" viewBox="0 0 6 6"><path d="M5 0 V6 L0.5 3 Z" fill="#b8b8b8"/></svg>
<span class="t" style="left:63px;top:602.40px;font-size:7.6px;line-height:12px;color:#222;letter-spacing:0.4px;">1 的 1</span>
<svg style="left:90px;top:604.5px;" width="6" height="6" viewBox="0 0 6 6"><path d="M1 0 V6 L5.5 3 Z" fill="#b8b8b8"/></svg>
<svg style="left:99px;top:604.5px;" width="7" height="6" viewBox="0 0 7 6"><path d="M6.5 0 V6" stroke="#b8b8b8" stroke-width="1"/><path d="M1 0 V6 L5.5 3 Z" fill="#b8b8b8"/></svg>
<svg style="left:110px;top:604px;" width="6" height="7" viewBox="0 0 6 7"><rect x="0.5" y="1.5" width="4" height="5" fill="none" stroke="#999" stroke-width="0.7"/><path d="M3 0 V3 M1.5 1.5 H4.5" stroke="#999" stroke-width="0.7"/></svg>
<svg style="left:121px;top:601px;" width="34" height="13" viewBox="0 0 34 13"><path d="M0 1.5 H2.5 L6.5 12.5 H27 L31 1.5 H34" fill="#fff" stroke="#8a8a8a" stroke-width="0.9"/><rect x="3" y="0" width="27.6" height="2" fill="#fff"/></svg>
<span class="t" style="left:129.5px;top:602.70px;font-size:7.6px;line-height:12px;color:#222;letter-spacing:0.4px;">页1</span>
<div style="left:0px;top:614px;width:1200px;height:13px;background:#f1f1f1;"></div>
<svg style="left:29px;top:618.5px;" width="3" height="5" viewBox="0 0 3 5"><path d="M0 0 L3 2.5 L0 5 Z" fill="#222"/></svg>
<svg style="left:38px;top:615px;" width="10" height="10" viewBox="0 0 10 10"><path d="M1 9 L2 7 L6 3 L7.5 4.5 L3.5 8.5 Z" fill="#333"/><path d="M6 2 L8.5 4.5 M7 3 L9 1" stroke="#222" stroke-width="1.5"/></svg>
<div style="left:55px;top:617px;width:1px;height:8px;background:#ddd;"></div>
<div style="left:60px;top:616px;width:11px;height:11px;background:#fff;border:1px solid #555;"></div>
<svg style="left:60px;top:616px;" width="11" height="11" viewBox="0 0 11 11"><path d="M1 1 L10 10 M10 1 L1 10" stroke="#555" stroke-width="0.7"/></svg>
<div style="left:71px;top:616px;width:11px;height:11px;background:#e60012;"></div>
<div style="left:82px;top:616px;width:11px;height:11px;background:#b5b5b5;"></div>
<div style="left:0px;top:627px;width:1200px;height:23px;background:#f1f1f1;"></div>
<div style="left:0px;top:627px;width:1200px;height:1px;background:#e2e2e2;"></div>
<span class="t" style="left:4px;top:633.90px;font-size:7.2px;line-height:12px;color:#222;">(175.018, 103.528 )</span>
<svg style="left:80px;top:636.5px;" width="3" height="5" viewBox="0 0 3 5"><path d="M0 0 L3 2.5 L0 5 Z" fill="#222"/></svg>
<span class="t" style="left:103px;top:633.90px;font-size:7.25px;line-height:12px;color:#222;">位图 (CMYK) 于 图层 1 300 x 300 dpi</span>
<svg style="left:915px;top:632px;" width="12" height="11" viewBox="0 0 12 11"><rect x="0.5" y="0.5" width="11" height="7.5" fill="#d8453c" stroke="#555" stroke-width="0.6"/><rect x="0.5" y="4" width="11" height="4" fill="#4aa3df"/><path d="M2 2.2 H10 M2 6 H10" stroke="#fff" stroke-width="0.8"/><path d="M3 10 H9 M6 8 V10" stroke="#555" stroke-width="1"/></svg>
<svg style="left:935px;top:632px;" width="10" height="11" viewBox="0 0 10 11"><path d="M1.5 5 L5.5 1.5 L9 5 L5.5 8.5 Z" fill="#fff" stroke="#333" stroke-width="0.9"/><path d="M3 5.5 L5.5 8 L8 5.5 Z" fill="#c8202a"/><circle cx="8.8" cy="9" r="1.1" fill="#c8202a"/></svg>
<div style="left:948px;top:631.5px;width:13px;height:13px;background:#fff;border:1px solid #8a8a8a;"></div>
<svg style="left:948px;top:631.5px;" width="13" height="13" viewBox="0 0 13 13"><path d="M1 1 L12 12 M12 1 L1 12" stroke="#222" stroke-width="0.9"/></svg>
<span class="t" style="left:964px;top:633.20px;font-size:7.6px;line-height:12px;color:#222;">无</span>
<div style="left:1059px;top:632px;width:1px;height:13px;background:#dcdcdc;"></div>
<svg style="left:1070px;top:632.5px;" width="6" height="11" viewBox="0 0 6 11"><path d="M3 0.5 L5 4 L4 6 H2 L1 4 Z" fill="#fff" stroke="#333" stroke-width="0.8"/><rect x="1.3" y="6.5" width="3.4" height="4" fill="none" stroke="#333" stroke-width="0.8"/></svg>
<div style="left:1077px;top:631.5px;width:13px;height:13px;background:#fff;border:1px solid #8a8a8a;"></div>
<svg style="left:1077px;top:631.5px;" width="13" height="13" viewBox="0 0 13 13"><path d="M1 1 L12 12 M12 1 L1 12" stroke="#222" stroke-width="0.9"/></svg>
<span class="t" style="left:1093px;top:633.20px;font-size:7.6px;line-height:12px;color:#222;">无</span>
<div style="left:1005px;top:73px;width:171px;height:541px;background:#f1f1f1;"></div>
<div style="left:1007px;top:73px;width:182px;height:13px;background:#e1e1e1;"></div>
<span class="t" style="left:1009px;top:74.50px;font-size:7.6px;line-height:12px;color:#222;">对齐与分布</span>
<svg style="left:1168px;top:76px;" width="5" height="7" viewBox="0 0 5 7"><rect x="0.5" y="0.5" width="3.6" height="5.6" fill="none" stroke="#c9c9c9" stroke-width="0.8"/></svg>
<svg style="left:1179px;top:76px;" width="5" height="7" viewBox="0 0 5 7"><rect x="0.5" y="0.5" width="3.6" height="5.6" fill="none" stroke="#c9c9c9" stroke-width="0.8"/></svg>
<div style="left:1007px;top:86px;width:168px;height:76px;background:#f7f7f7;"></div>
<div style="left:1007px;top:162px;width:168px;height:103px;background:#ebebeb;"></div>
<div style="left:1174px;top:86px;width:2px;height:541px;background:#8fcde6;"></div>
<div style="left:1005px;top:86px;width:2px;height:528px;background:#f5f5f5;"></div>
<span class="t" style="left:1010px;top:88.70px;font-size:7.6px;line-height:12px;color:#222;">对齐</span>
<span class="t" style="left:1084px;top:88.70px;font-size:7.6px;line-height:12px;color:#222;">分布</span>
<div style="left:1077px;top:90px;width:1px;height:44px;background:#e2e2e2;"></div>
<svg style="left:1010.5px;top:103.5px;" width="11" height="11" viewBox="0 0 11 11"><path d="M1.5 0 V11" stroke="#7cc7d6" stroke-width="1"/><rect x="2.5" y="2" width="7.5" height="2.6" fill="none" stroke="#4a4a4a" stroke-width="0.9"/><rect x="2.5" y="6.4" width="4.5" height="2.6" fill="none" stroke="#4a4a4a" stroke-width="0.9"/></svg>
<svg style="left:1034.5px;top:103.5px;" width="11" height="11" viewBox="0 0 11 11"><path d="M6 0 V11" stroke="#7cc7d6" stroke-width="1"/><rect x="1.5" y="2" width="9" height="2.6" fill="none" stroke="#4a4a4a" stroke-width="0.9"/><rect x="3.8" y="6.4" width="4.5" height="2.6" fill="none" stroke="#4a4a4a" stroke-width="0.9"/></svg>
<svg style="left:1057.5px;top:103.5px;" width="11" height="11" viewBox="0 0 11 11"><path d="M10.5 0 V11" stroke="#7cc7d6" stroke-width="1"/><rect x="2" y="2" width="7.5" height="2.6" fill="none" stroke="#4a4a4a" stroke-width="0.9"/><rect x="5" y="6.4" width="4.5" height="2.6" fill="none" stroke="#4a4a4a" stroke-width="0.9"/></svg>
<svg style="left:1010.5px;top:121.5px;" width="11" height="11" viewBox="0 0 11 11"><path d="M0 1.5 H11" stroke="#7cc7d6" stroke-width="1"/><rect x="2" y="2.5" width="2.6" height="7.5" fill="none" stroke="#4a4a4a" stroke-width="0.9"/><rect x="6.4" y="2.5" width="2.6" height="4.5" fill="none" stroke="#4a4a4a" stroke-width="0.9"/></svg>
<svg style="left:1034.5px;top:121.5px;" width="11" height="11" viewBox="0 0 11 11"><path d="M0 6 H11" stroke="#7cc7d6" stroke-width="1"/><rect x="2" y="1.5" width="2.6" height="9" fill="none" stroke="#4a4a4a" stroke-width="0.9"/><rect x="6.4" y="3.8" width="2.6" height="4.5" fill="none" stroke="#4a4a4a" stroke-width="0.9"/></svg>
<svg style="left:1057.5px;top:121.5px;" width="11" height="11" viewBox="0 0 11 11"><path d="M0 10.5 H11" stroke="#7cc7d6" stroke-width="1"/><rect x="2" y="2" width="2.6" height="7.5" fill="none" stroke="#4a4a4a" stroke-width="0.9"/><rect x="6.4" y="5" width="2.6" height="4.5" fill="none" stroke="#4a4a4a" stroke-width="0.9"/></svg>
<svg style="left:1085.5px;top:103.5px;" width="11" height="11" viewBox="0 0 11 11"><rect x="1" y="6.5" width="2.8" height="2.8" fill="none" stroke="#4a4a4a" stroke-width="0.9"/><rect x="6.5" y="2.5" width="2.8" height="2.8" fill="none" stroke="#4a4a4a" stroke-width="0.9"/><path d="M1 1 H9.5" stroke="#4a4a4a" stroke-width="0.8" stroke-dasharray="1.5 1"/><path d="M1 1 V5 M9.5 1 V2" stroke="#7cc7d6" stroke-width="0.8"/></svg>
<svg style="left:1085.5px;top:121.5px;" width="11" height="11" viewBox="0 0 11 11"><rect x="1" y="6.5" width="2.8" height="2.8" fill="none" stroke="#4a4a4a" stroke-width="0.9"/><rect x="6.5" y="2.5" width="2.8" height="2.8" fill="none" stroke="#4a4a4a" stroke-width="0.9"/><path d="M10 1 V10" stroke="#4a4a4a" stroke-width="0.8" stroke-dasharray="1.5 1"/><path d="M5 10 H10" stroke="#7cc7d6" stroke-width="0.8"/></svg>
<svg style="left:1108.5px;top:103.5px;" width="11" height="11" viewBox="0 0 11 11"><rect x="1" y="6.5" width="2.8" height="2.8" fill="none" stroke="#4a4a4a" stroke-width="0.9"/><rect x="6.5" y="2.5" width="2.8" height="2.8" fill="none" stroke="#4a4a4a" stroke-width="0.9"/><path d="M1 1 H9.5" stroke="#4a4a4a" stroke-width="0.8" stroke-dasharray="1.5 1"/><path d="M1 1 V5 M9.5 1 V2" stroke="#7cc7d6" stroke-width="0.8"/></svg>
<svg style="left:1108.5px;top:121.5px;" width="11" height="11" viewBox="0 0 11 11"><rect x="1" y="6.5" width="2.8" height="2.8" fill="none" stroke="#4a4a4a" stroke-width="0.9"/><rect x="6.5" y="2.5" width="2.8" height="2.8" fill="none" stroke="#4a4a4a" stroke-width="0.9"/><path d="M10 1 V10" stroke="#4a4a4a" stroke-width="0.8" stroke-dasharray="1.5 1"/><path d="M5 10 H10" stroke="#7cc7d6" stroke-width="0.8"/></svg>
<svg style="left:1131.5px;top:103.5px;" width="11" height="11" viewBox="0 0 11 11"><rect x="1" y="6.5" width="2.8" height="2.8" fill="none" stroke="#4a4a4a" stroke-width="0.9"/><rect x="6.5" y="2.5" width="2.8" height="2.8" fill="none" stroke="#4a4a4a" stroke-width="0.9"/><path d="M1 1 H9.5" stroke="#4a4a4a" stroke-width="0.8" stroke-dasharray="1.5 1"/><path d="M1 1 V5 M9.5 1 V2" stroke="#7cc7d6" stroke-width="0.8"/></svg>
<svg style="left:1131.5px;top:121.5px;" width="11" height="11" viewBox="0 0 11 11"><rect x="1" y="6.5" width="2.8" height="2.8" fill="none" stroke="#4a4a4a" stroke-width="0.9"/><rect x="6.5" y="2.5" width="2.8" height="2.8" fill="none" stroke="#4a4a4a" stroke-width="0.9"/><path d="M10 1 V10" stroke="#4a4a4a" stroke-width="0.8" stroke-dasharray="1.5 1"/><path d="M5 10 H10" stroke="#7cc7d6" stroke-width="0.8"/></svg>
<svg style="left:1159.5px;top:103.5px;" width="11" height="11" viewBox="0 0 11 11"><rect x="1" y="6.5" width="2.8" height="2.8" fill="none" stroke="#4a4a4a" stroke-width="0.9"/><rect x="6.5" y="2.5" width="2.8" height="2.8" fill="none" stroke="#4a4a4a" stroke-width="0.9"/><path d="M1 1 H9.5" stroke="#4a4a4a" stroke-width="0.8" stroke-dasharray="1.5 1"/><path d="M1 1 V5 M9.5 1 V2" stroke="#7cc7d6" stroke-width="0.8"/></svg>
<svg style="left:1159.5px;top:121.5px;" width="11" height="11" viewBox="0 0 11 11"><rect x="1" y="6.5" width="2.8" height="2.8" fill="none" stroke="#4a4a4a" stroke-width="0.9"/><rect x="6.5" y="2.5" width="2.8" height="2.8" fill="none" stroke="#4a4a4a" stroke-width="0.9"/><path d="M10 1 V10" stroke="#4a4a4a" stroke-width="0.8" stroke-dasharray="1.5 1"/><path d="M5 10 H10" stroke="#7cc7d6" stroke-width="0.8"/></svg>
<div style="left:1010px;top:138px;width:161px;height:1px;background:#e4e4e4;"></div>
<span class="t" style="left:1010px;top:144.70px;font-size:7.6px;line-height:12px;color:#d4d4d4;">文本</span>
<svg style="left:1086px;top:145px;" width="10" height="10" viewBox="0 0 10 10"><path d="M3 1 V9 M7 1 V9 M1 3 H4 M6 5 H9" stroke="#d2d2d2" stroke-width="1" stroke-dasharray="1.5 1"/></svg>
<svg style="left:1110px;top:145px;" width="10" height="10" viewBox="0 0 10 10"><path d="M3 1 V9 M7 1 V9 M1 3 H4 M6 5 H9" stroke="#d2d2d2" stroke-width="1" stroke-dasharray="1.5 1"/></svg>
<svg style="left:1132px;top:145px;" width="10" height="10" viewBox="0 0 10 10"><path d="M3 1 V9 M7 1 V9 M1 3 H4 M6 5 H9" stroke="#d2d2d2" stroke-width="1" stroke-dasharray="1.5 1"/></svg>
<div style="left:1151px;top:143px;width:1px;height:14px;background:#e2e2e2;"></div>
<svg style="left:1160px;top:145px;" width="11" height="11" viewBox="0 0 11 11"><path d="M5 0 V10 M0 5 H10" stroke="#2a86b8" stroke-width="1.2"/><path d="M5.5 5.5 H10.5 V8 L8 10.5 H5.5 Z" fill="#1f8fc4"/></svg>
<svg style="left:1088.5px;top:166.5px;" width="5" height="3" viewBox="0 0 5 3"><path d="M0 3 H5 L2.5 0 Z" fill="#222"/></svg>
<span class="t" style="left:1010px;top:173.30px;font-size:7.6px;line-height:12px;color:#222;">对齐对象到:</span>
<div style="left:1009.5px;top:186px;width:15.5px;height:16px;background:#ddeefa;border:1px solid #b8c9d6;"></div>
<svg style="left:1012px;top:188.5px;" width="11" height="11" viewBox="0 0 11 11"><rect x="0.8" y="2.8" width="7" height="7" fill="#bfe6ee" stroke="#3b8e9c" stroke-width="0.9"/><rect x="3.2" y="0.8" width="7" height="7" fill="none" stroke="#4a4a4a" stroke-width="0.9"/></svg>
<svg style="left:1036.5px;top:188.5px;" width="11" height="11" viewBox="0 0 11 11"><rect x="0.8" y="0.8" width="9.4" height="9.4" fill="none" stroke="#4a4a4a" stroke-width="1"/><rect x="2.2" y="2.2" width="1.6" height="1.6" fill="#4a4a4a"/><rect x="7.2" y="2.2" width="1.6" height="1.6" fill="#4a4a4a"/><rect x="2.2" y="7.2" width="1.6" height="1.6" fill="#4a4a4a"/><rect x="7.2" y="7.2" width="1.6" height="1.6" fill="#4a4a4a"/><rect x="4.7" y="4.7" width="1.6" height="1.6" fill="#4a4a4a"/></svg>
<svg style="left:1061.5px;top:188.5px;" width="11" height="11" viewBox="0 0 11 11"><rect x="0.8" y="0.8" width="9.4" height="9.4" fill="none" stroke="#4a4a4a" stroke-width="1"/><path d="M1 1 L4 4 M10 1 L7 4 M1 10 L4 7 M10 10 L7 7" stroke="#4a4a4a" stroke-width="1.3"/></svg>
<svg style="left:1086.0px;top:188.5px;" width="11" height="11" viewBox="0 0 11 11"><rect x="0.8" y="0.8" width="9.4" height="9.4" fill="none" stroke="#4a4a4a" stroke-width="1"/><path d="M0.8 4 H10.2 M0.8 7 H10.2 M4 0.8 V10.2 M7 0.8 V10.2" stroke="#4a4a4a" stroke-width="0.8"/></svg>
<svg style="left:1110.5px;top:188.5px;" width="11" height="11" viewBox="0 0 11 11"><rect x="0.8" y="0.8" width="9.4" height="9.4" fill="none" stroke="#4a4a4a" stroke-width="1"/><circle cx="7.5" cy="3.3" r="0.9" fill="#4a4a4a"/></svg>
<span class="t" style="left:1037px;top:204.70px;font-size:6px;line-height:12px;color:#d0d0d0;">X:</span>
<span class="t" style="left:1037px;top:214.70px;font-size:6px;line-height:12px;color:#d0d0d0;">Y:</span>
<div style="left:1044px;top:205px;width:89px;height:10px;background:#f1f1f1;border:1px solid #dcdcdc;"></div>
<div style="left:1044px;top:214.5px;width:89px;height:10px;background:#f1f1f1;border:1px solid #dcdcdc;"></div>
<span class="t" style="left:1046.5px;top:204.90px;font-size:7.2px;line-height:12px;color:#9a9a9a;">148.5 mm</span>
<span class="t" style="left:1046.5px;top:214.50px;font-size:7.2px;line-height:12px;color:#9a9a9a;">75.0 mm</span>
<div style="left:1133px;top:205px;width:15px;height:10px;background:#f1f1f1;border:1px solid #dcdcdc;"></div>
<div style="left:1133px;top:214.5px;width:15px;height:10px;background:#f1f1f1;border:1px solid #dcdcdc;"></div>
<svg style="left:1157px;top:210px;" width="10" height="10" viewBox="0 0 10 10"><circle cx="5" cy="5" r="3.5" fill="none" stroke="#d6d6d6" stroke-width="0.9"/><path d="M5 0 V10 M0 5 H10" stroke="#d6d6d6" stroke-width="0.6"/></svg>
<div style="left:1010px;top:229px;width:161px;height:1px;background:#e2e2e2;"></div>
<span class="t" style="left:1010px;top:233.30px;font-size:7.6px;line-height:12px;color:#222;">将对象分布到:</span>
<div style="left:1009px;top:245px;width:16px;height:16px;background:#e9f4f8;border:1px solid #b8c9d6;"></div>
<svg style="left:1011.5px;top:247.5px;" width="11" height="11" viewBox="0 0 11 11"><rect x="0.8" y="0.8" width="9.4" height="9.4" fill="#fff" stroke="#9cc" stroke-width="0.7"/><path d="M1.5 5.5 H9.5" stroke="#4a4a4a" stroke-width="1.2"/><path d="M1.5 3 V8 M9.5 3 V8" stroke="#4a4a4a" stroke-width="0.9"/></svg>
<svg style="left:1036.5px;top:247.5px;" width="11" height="11" viewBox="0 0 11 11"><rect x="0.8" y="0.8" width="9.4" height="9.4" rx="1" fill="none" stroke="#4a4a4a" stroke-width="1"/><path d="M0.8 5.5 H10.2" stroke="#4a4a4a" stroke-width="1"/></svg>
<svg style="left:0px;top:0px;" width="1200" height="650" viewBox="0 0 1200 650"><path d="M862 596 L862 603 L990 603 L990 501.5 L1085 502 C1087.5 503.0 1092.7 504.5 1100.0 508.0C1107.3 511.5 1120.2 517.8 1129.0 523.0C1137.8 528.2 1146.9 533.4 1152.6 539.0C1158.3 544.6 1160.3 550.7 1163.0 556.5C1165.7 562.3 1168.2 568.1 1168.7 574.0C1169.2 579.9 1168.0 585.8 1165.8 591.6C1163.6 597.4 1160.1 604.1 1155.5 609.0C1150.9 613.9 1144.3 618.0 1138.0 620.8C1131.7 623.5 1125.5 624.5 1117.5 625.5C1109.5 626.5 1094.6 626.8 1090.0 627.0 L905 627 C893 626 886 618 878 614 L862 613 Z" fill="#ffffff"/></svg>
<div style="left:862px;top:586px;width:132px;height:28px;background:#ffffff;"></div>
<div style="left:988px;top:502px;width:6px;height:100px;background:#ffffff;"></div>
<div style="left:1176px;top:86px;width:12px;height:541px;background:#e4e4e4;"></div>
<div style="left:1176px;top:199px;width:13px;height:62px;background:#cfe4f6;"></div>
<svg style="left:1176.5px;top:87px;" width="8" height="10" viewBox="0 0 8 10"><path d="M1 0.5 V7.5 L2.8 6 L4 8.6 L5 8.1 L3.9 5.6 L6 5.4 Z" fill="#222"/></svg>
<span class="t" style="left:1183.5px;top:84.70px;font-size:6px;line-height:12px;color:#333;">?</span>
<span class="t" style="left:1186px;top:97.5px;font-size:7.7px;line-height:12px;color:#222;transform-origin:0 0;transform:rotate(90deg);">提示(N)</span>
<svg style="left:1177px;top:139px;" width="11" height="9" viewBox="0 0 11 9"><path d="M2.5 1 V7 M5 1 V7 M1 3 H6.5 M1 5.5 H6.5" stroke="#444" stroke-width="0.8"/><path d="M8 1 H10 M8 2.5 H10" stroke="#666" stroke-width="0.6"/></svg>
<span class="t" style="left:1186px;top:152px;font-size:7.7px;line-height:12px;color:#222;transform-origin:0 0;transform:rotate(90deg);">对象管理器</span>
<svg style="left:1177px;top:207px;" width="9" height="9" viewBox="0 0 9 9"><path d="M1.5 0.5 V8.5 H8" fill="none" stroke="#3b8e9c" stroke-width="0.9"/><rect x="3" y="3" width="2.5" height="4.5" fill="none" stroke="#444" stroke-width="0.8"/></svg>
<span class="t" style="left:1186px;top:219px;font-size:7.7px;line-height:12px;color:#222;transform-origin:0 0;transform:rotate(90deg);">对齐与分布</span>
<span class="t" style="left:1176.5px;top:268.70px;font-size:6px;line-height:12px;color:#333;">A</span>
<svg style="left:1181.5px;top:268px;" width="5" height="5" viewBox="0 0 5 5"><path d="M0 4 L4 0" stroke="#444" stroke-width="0.8"/></svg>
<span class="t" style="left:1186px;top:280.5px;font-size:7.7px;line-height:12px;color:#222;transform-origin:0 0;transform:rotate(90deg);">字体乐园</span>
<span class="t" style="left:1176.5px;top:328.70px;font-size:6px;line-height:12px;color:#333;">A</span>
<svg style="left:1181.5px;top:329px;" width="5" height="5" viewBox="0 0 5 5"><circle cx="2.5" cy="2.5" r="1.5" fill="none" stroke="#333" stroke-width="0.9"/></svg>
<span class="t" style="left:1186px;top:341px;font-size:7.7px;line-height:12px;color:#222;transform-origin:0 0;transform:rotate(90deg);">文本属性</span>
<svg style="left:1177px;top:385px;" width="10" height="10" viewBox="0 0 10 10"><path d="M2 1 V8" stroke="#333" stroke-width="1" stroke-dasharray="1.5 1"/><path d="M2 8.5 H9" stroke="#333" stroke-width="1" stroke-dasharray="1.5 1"/></svg>
<span class="t" style="left:1186px;top:399px;font-size:7.7px;line-height:12px;color:#222;transform-origin:0 0;transform:rotate(90deg);">辅助线</span>
<svg style="left:1176.5px;top:436px;" width="10" height="10" viewBox="0 0 10 10"><circle cx="5" cy="5" r="4" fill="none" stroke="#222" stroke-width="1"/></svg>
<span class="t" style="left:1186px;top:449px;font-size:7.7px;line-height:12px;color:#222;transform-origin:0 0;transform:rotate(90deg);">透镜</span>
<svg style="left:1177px;top:477.5px;" width="9" height="9" viewBox="0 0 9 9"><path d="M1.5 1 Q4.5 2.5 7.5 1 V6.5 Q4.5 5 1.5 6.5 Z" fill="none" stroke="#333" stroke-width="0.8"/><path d="M1 8 H8" stroke="#333" stroke-width="0.8"/></svg>
<span class="t" style="left:1186px;top:489px;font-size:7.7px;line-height:12px;color:#222;transform-origin:0 0;transform:rotate(90deg);">封套...</span>
<svg style="left:1176.5px;top:525.5px;" width="11" height="11" viewBox="0 0 11 11"><path d="M1 10 V3.5 L4 1 H10 V10 Z" fill="none" stroke="#333" stroke-width="0.9"/></svg>
<svg style="left:1176.5px;top:542.5px;" width="11" height="11" viewBox="0 0 11 11"><path d="M1 6 L5 2 L10 5 L6 9.5 Z" fill="none" stroke="#333" stroke-width="0.9"/><path d="M3.5 7.5 L7 4" stroke="#333" stroke-width="0.8"/></svg>
<svg style="left:1176.5px;top:559px;" width="11" height="11" viewBox="0 0 11 11"><rect x="1" y="1" width="9" height="9" fill="#ccc" stroke="#333" stroke-width="0.9"/><path d="M1 2.5 H10" stroke="#333" stroke-width="1.2"/></svg>
<svg style="left:1176.5px;top:574.5px;" width="11" height="11" viewBox="0 0 11 11"><rect x="1" y="1" width="9" height="9" fill="none" stroke="#333" stroke-width="0.9"/><rect x="3.5" y="3.5" width="4" height="4" fill="none" stroke="#333" stroke-width="0.8"/><path d="M1 1 L3.5 3.5 M10 1 L7.5 3.5 M1 10 L3.5 7.5 M10 10 L7.5 7.5" stroke="#333" stroke-width="0.7"/></svg>
<svg style="left:1176.5px;top:599px;" width="11" height="11" viewBox="0 0 11 11"><circle cx="5.5" cy="5.5" r="4.5" fill="none" stroke="#c8c8c8" stroke-width="0.9"/><rect x="4" y="2.8" width="3" height="5.4" fill="none" stroke="#c8c8c8" stroke-width="0.7"/></svg>
<div style="left:1188px;top:86px;width:12px;height:541px;background:#f1f1f1;"></div>
<svg style="left:1191.5px;top:74.5px;" width="4" height="6" viewBox="0 0 4 6"><path d="M0 0 L4 3 L0 6 Z" fill="#111"/></svg>
<svg style="left:1190px;top:89px;" width="9" height="10" viewBox="0 0 9 10"><path d="M1 9 L5.5 4" stroke="#c8c8c8" stroke-width="1.3"/><path d="M5 3 L7.5 1 L8.5 2 L6.5 4.5 Z" fill="#c4c4c4"/></svg>
<div style="left:1193px;top:104px;width:1px;height:6px;background:#e0e0e0;"></div>
<div style="left:1188.5px;top:114px;width:11.5px;height:10.5px;background:#fff;border:1px solid #8a8a8a;"></div>
<svg style="left:1188.5px;top:114px;" width="11.5" height="10.5" viewBox="0 0 11.5 10.5"><path d="M1 1 L10.5 9.5 M10.5 1 L1 9.5" stroke="#222" stroke-width="0.9"/></svg>
<svg style="left:1188.5px;top:124.4px;" width="12" height="476" viewBox="0 0 12 476"><rect x="0" y="0.00" width="12" height="10.9" fill="#231815"/><rect x="0" y="10.65" width="12" height="10.9" fill="#3e3a39"/><rect x="0" y="21.30" width="12" height="10.9" fill="#595757"/><rect x="0" y="31.95" width="12" height="10.9" fill="#727171"/><rect x="0" y="42.60" width="12" height="10.9" fill="#898989"/><rect x="0" y="53.25" width="12" height="10.9" fill="#9fa0a0"/><rect x="0" y="63.90" width="12" height="10.9" fill="#b5b5b6"/><rect x="0" y="74.55" width="12" height="10.9" fill="#c9caca"/><rect x="0" y="85.20" width="12" height="10.9" fill="#dcdddd"/><rect x="0" y="95.85" width="12" height="10.9" fill="#efefef"/><rect x="0" y="106.50" width="12" height="10.9" fill="#ffffff"/><rect x="0" y="117.15" width="12" height="10.9" fill="#1d2088"/><rect x="0" y="127.80" width="12" height="10.9" fill="#00a0e9"/><rect x="0" y="138.45" width="12" height="10.9" fill="#009944"/><rect x="0" y="149.10" width="12" height="10.9" fill="#fff100"/><rect x="0" y="159.75" width="12" height="10.9" fill="#e60012"/><rect x="0" y="170.40" width="12" height="10.9" fill="#e4007f"/><rect x="0" y="181.05" width="12" height="10.9" fill="#a5489a"/><rect x="0" y="191.70" width="12" height="10.9" fill="#f39800"/><rect x="0" y="202.35" width="12" height="10.9" fill="#f5b2b8"/><rect x="0" y="213.00" width="12" height="10.9" fill="#8c7b75"/><rect x="0" y="223.65" width="12" height="10.9" fill="#d6d3ec"/><rect x="0" y="234.30" width="12" height="10.9" fill="#a79cc9"/><rect x="0" y="244.95" width="12" height="10.9" fill="#7f8fca"/><rect x="0" y="255.60" width="12" height="10.9" fill="#7563ad"/><rect x="0" y="266.25" width="12" height="10.9" fill="#8e88b9"/><rect x="0" y="276.90" width="12" height="10.9" fill="#5069a9"/><rect x="0" y="287.55" width="12" height="10.9" fill="#5a5586"/><rect x="0" y="298.20" width="12" height="10.9" fill="#6d88a9"/><rect x="0" y="308.85" width="12" height="10.9" fill="#0f8be0"/><rect x="0" y="319.50" width="12" height="10.9" fill="#8fd3f5"/><rect x="0" y="330.15" width="12" height="10.9" fill="#b9d3e6"/><rect x="0" y="340.80" width="12" height="10.9" fill="#9fb4c0"/><rect x="0" y="351.45" width="12" height="10.9" fill="#758691"/><rect x="0" y="362.10" width="12" height="10.9" fill="#46505a"/><rect x="0" y="372.75" width="12" height="10.9" fill="#4a696c"/><rect x="0" y="383.40" width="12" height="10.9" fill="#2f9680"/><rect x="0" y="394.05" width="12" height="10.9" fill="#6ea49c"/><rect x="0" y="404.70" width="12" height="10.9" fill="#3aa88e"/><rect x="0" y="415.35" width="12" height="10.9" fill="#4aa870"/><rect x="0" y="426.00" width="12" height="10.9" fill="#45b8cc"/><rect x="0" y="436.65" width="12" height="10.9" fill="#3aa5b0"/><rect x="0" y="447.30" width="12" height="10.9" fill="#b0ccb8"/><rect x="0" y="457.95" width="12" height="10.9" fill="#dcefd9"/><rect x="0" y="468.60" width="12" height="10.9" fill="#a0d8a0"/></svg>
<span class="t" style="left:1191px;top:599.20px;font-size:7px;line-height:12px;color:#c4c4c4;transform:rotate(-90deg);">»</span>
<span class="t" style="left:1191px;top:611.20px;font-size:7px;line-height:12px;color:#c4c4c4;transform:rotate(-90deg);">»</span>
<div style="left:597px;top:259px;width:142px;height:375px;background:#ffffff;border:1px solid #c9c9c9;box-shadow:1px 1px 2px rgba(0,0,0,0.18);"></div>
<div style="left:598px;top:260px;width:19px;height:373px;background:#f8f8f8;"></div>
<div style="left:598px;top:318.5px;width:139px;height:18.5px;background:#daecf9;border:3px solid #e8333a;"></div>
<span class="t" style="left:619px;top:262.70px;font-size:7.6px;line-height:12px;color:#222;">PowerClip 内部(<u>P</u>)...</span>
<div style="left:619px;top:277px;width:117px;height:1px;background:#e3e3e3;"></div>
<span class="t" style="left:619px;top:282.10px;font-size:7.6px;line-height:12px;color:#222;">编辑位图(<u>E</u>)...</span>
<span class="t" style="left:619px;top:295.30px;font-size:7.6px;line-height:12px;color:#222;">快速描摹(<u>Q</u>)</span>
<span class="t" style="left:619px;top:308.50px;font-size:7.6px;line-height:12px;color:#222;">中心线描摹(<u>C</u>)</span>
<svg style="left:730px;top:311.3px;" width="3" height="5" viewBox="0 0 3 5"><path d="M0 0 L3 2.5 L0 5 Z" fill="#222"/></svg>
<span class="t" style="left:619px;top:322.30px;font-size:7.6px;line-height:12px;color:#222;">轮廓描摹(<u>O</u>)</span>
<svg style="left:730px;top:325.1px;" width="3" height="5" viewBox="0 0 3 5"><path d="M0 0 L3 2.5 L0 5 Z" fill="#222"/></svg>
<span class="t" style="left:619px;top:336.50px;font-size:7.6px;line-height:12px;color:#c9c9c9;">转换为曲线(<u>V</u>)</span>
<span class="t" style="right:477px;top:336.50px;font-size:7.6px;line-height:12px;color:#c9c9c9;">Ctrl+Q</span>
<span class="t" style="left:619px;top:350.10px;font-size:7.6px;line-height:12px;color:#c9c9c9;">拆分</span>
<span class="t" style="right:477px;top:350.10px;font-size:7.6px;line-height:12px;color:#c9c9c9;">Ctrl+K</span>
<span class="t" style="left:619px;top:363.90px;font-size:7.6px;line-height:12px;color:#222;">段落文本换行(<u>W</u>)</span>
<span class="t" style="left:619px;top:377.20px;font-size:7.6px;line-height:12px;color:#222;">连线换行</span>
<div style="left:619px;top:391px;width:117px;height:1px;background:#e3e3e3;"></div>
<span class="t" style="left:619px;top:396.20px;font-size:7.6px;line-height:12px;color:#222;">撤消彩色玻璃(<u>U</u>)</span>
<span class="t" style="right:477px;top:396.20px;font-size:7.6px;line-height:12px;color:#222;">Ctrl+Z</span>
<span class="t" style="left:619px;top:409.50px;font-size:7.6px;line-height:12px;color:#222;">剪切(<u>T</u>)</span>
<span class="t" style="right:477px;top:409.50px;font-size:7.6px;line-height:12px;color:#222;">Ctrl+X</span>
<span class="t" style="left:619px;top:423.00px;font-size:7.6px;line-height:12px;color:#222;">复制(<u>C</u>)</span>
<span class="t" style="right:477px;top:423.00px;font-size:7.6px;line-height:12px;color:#222;">Ctrl+C</span>
<span class="t" style="left:619px;top:436.50px;font-size:7.6px;line-height:12px;color:#222;">删除(<u>L</u>)</span>
<span class="t" style="right:477px;top:436.50px;font-size:7.6px;line-height:12px;color:#222;">删除</span>
<div style="left:619px;top:451px;width:117px;height:1px;background:#e3e3e3;"></div>
<span class="t" style="left:619px;top:455.30px;font-size:7.6px;line-height:12px;color:#222;">隐藏对象(<u>H</u>)</span>
<span class="t" style="left:619px;top:468.70px;font-size:7.6px;line-height:12px;color:#222;">锁定对象(<u>L</u>)</span>
<span class="t" style="left:619px;top:482.70px;font-size:7.6px;line-height:12px;color:#222;">位图另存为(<u>P</u>)...</span>
<div style="left:619px;top:497px;width:117px;height:1px;background:#e3e3e3;"></div>
<span class="t" style="left:619px;top:500.90px;font-size:7.6px;line-height:12px;color:#222;">顺序(<u>O</u>)</span>
<svg style="left:730px;top:503.7px;" width="3" height="5" viewBox="0 0 3 5"><path d="M0 0 L3 2.5 L0 5 Z" fill="#222"/></svg>
<span class="t" style="left:619px;top:514.50px;font-size:7.6px;line-height:12px;color:#222;">对象样式(<u>S</u>)</span>
<svg style="left:730px;top:517.3px;" width="3" height="5" viewBox="0 0 3 5"><path d="M0 0 L3 2.5 L0 5 Z" fill="#222"/></svg>
<span class="t" style="left:619px;top:527.90px;font-size:7.6px;line-height:12px;color:#222;">颜色样式(<u>R</u>)</span>
<svg style="left:730px;top:530.7px;" width="3" height="5" viewBox="0 0 3 5"><path d="M0 0 L3 2.5 L0 5 Z" fill="#222"/></svg>
<span class="t" style="left:619px;top:541.70px;font-size:7.6px;line-height:12px;color:#222;">因特网链接(<u>N</u>)</span>
<svg style="left:730px;top:544.5px;" width="3" height="5" viewBox="0 0 3 5"><path d="M0 0 L3 2.5 L0 5 Z" fill="#222"/></svg>
<span class="t" style="left:619px;top:555.50px;font-size:7.6px;line-height:12px;color:#c9c9c9;">跳转到浏览器中的超链接(<u>J</u>)</span>
<div style="left:619px;top:570.5px;width:117px;height:1px;background:#e3e3e3;"></div>
<span class="t" style="left:619px;top:574.20px;font-size:7.6px;line-height:12px;color:#222;">叠印位图(<u>V</u>)</span>
<span class="t" style="left:619px;top:587.70px;font-size:7.6px;line-height:12px;color:#222;">对象提示(<u>H</u>)</span>
<div style="left:619px;top:602px;width:117px;height:1px;background:#e3e3e3;"></div>
<span class="t" style="left:619px;top:605.50px;font-size:7.6px;line-height:12px;color:#222;">对象属性(<u>I</u>)</span>
<span class="t" style="right:477px;top:605.50px;font-size:7.6px;line-height:12px;color:#222;">Alt+Enter</span>
<span class="t" style="left:619px;top:619.70px;font-size:7.6px;line-height:12px;color:#222;">符号(<u>Y</u>)</span>
<svg style="left:730px;top:622.5px;" width="3" height="5" viewBox="0 0 3 5"><path d="M0 0 L3 2.5 L0 5 Z" fill="#222"/></svg>
<svg style="left:601px;top:262.0px;" width="12" height="12" viewBox="0 0 12 12"><rect x="1" y="5" width="9.5" height="5.5" fill="none" stroke="#2b2b2b" stroke-width="1"/><path d="M2 3.2 Q5.5 1 9 3.2" fill="none" stroke="#555" stroke-width="0.8" stroke-dasharray="1.4 0.9"/><path d="M9.5 1 V3 M8.5 2 H10.5" stroke="#555" stroke-width="0.6"/></svg>
<svg style="left:601px;top:281.4px;" width="12" height="12" viewBox="0 0 12 12"><rect x="1.5" y="2.5" width="8" height="8" fill="none" stroke="#2b2b2b" stroke-width="0.9"/><rect x="0.5" y="1.5" width="2" height="2" fill="#2b2b2b"/><rect x="8.5" y="1.5" width="2" height="2" fill="#2b2b2b"/><rect x="0.5" y="9.5" width="2" height="2" fill="#2b2b2b"/><rect x="8.5" y="9.5" width="2" height="2" fill="#2b2b2b"/><path d="M6 6 L10.5 1" stroke="#2b2b2b" stroke-width="1.4"/></svg>
<svg style="left:601px;top:294.6px;" width="12" height="12" viewBox="0 0 12 12"><rect x="1.5" y="2.5" width="8" height="8" fill="none" stroke="#2b2b2b" stroke-width="0.9"/><rect x="0.5" y="1.5" width="2" height="2" fill="#2b2b2b"/><rect x="8.5" y="1.5" width="2" height="2" fill="#2b2b2b"/><rect x="0.5" y="9.5" width="2" height="2" fill="#2b2b2b"/><rect x="8.5" y="9.5" width="2" height="2" fill="#2b2b2b"/><path d="M5 6 L8 3 M8.5 1 L10 2.5" stroke="#666" stroke-width="0.8"/></svg>
<svg style="left:601px;top:335.8px;" width="12" height="12" viewBox="0 0 12 12"><path d="M3 3 A4.2 4.2 0 1 1 2 7" fill="none" stroke="#d6d6d6" stroke-width="1"/><rect x="1" y="1" width="3" height="3" fill="#dcdcdc"/></svg>
<svg style="left:601px;top:349.4px;" width="12" height="12" viewBox="0 0 12 12"><rect x="1" y="1" width="5" height="5" fill="none" stroke="#d6d6d6" stroke-width="0.9"/><rect x="6" y="5" width="5" height="6" fill="none" stroke="#d6d6d6" stroke-width="0.9"/><rect x="1" y="8" width="3" height="3" fill="none" stroke="#d6d6d6" stroke-width="0.8"/></svg>
<svg style="left:601px;top:363.2px;" width="12" height="12" viewBox="0 0 12 12"><path d="M1 1.5 H11 M1 10.5 H11" stroke="#2b2b2b" stroke-width="1.1"/><path d="M1 4.5 H5 M1 7.5 H5" stroke="#3b8fb0" stroke-width="1.1"/><rect x="6.3" y="3.6" width="4.4" height="4.6" fill="#bfe3f0" stroke="#3b8fb0" stroke-width="0.8"/></svg>
<div style="left:600px;top:375px;width:13px;height:15px;background:#fdfdfd;border:1px solid #e0e0e0;"></div>
<svg style="left:601px;top:376.5px;" width="12" height="12" viewBox="0 0 12 12"><path d="M6 0.5 V11.5" stroke="#444" stroke-width="0.9"/><rect x="3.5" y="3.5" width="2" height="5" fill="#d0782a"/><rect x="6.5" y="3.5" width="2" height="5" fill="none" stroke="#d0782a" stroke-width="0.7"/></svg>
<svg style="left:601px;top:395.5px;" width="12" height="12" viewBox="0 0 12 12"><path d="M3.2 3.4 A4.3 4.3 0 1 1 2 7" fill="none" stroke="#444" stroke-width="1" stroke-dasharray="1.6 1"/><path d="M1.5 1.5 L5 2.2 L2.8 5 Z" fill="#333"/></svg>
<svg style="left:601px;top:408.8px;" width="12" height="12" viewBox="0 0 12 12"><rect x="1" y="1" width="6.5" height="4.5" fill="none" stroke="#555" stroke-width="1"/><path d="M2.5 3.2 H6" stroke="#555" stroke-width="0.8"/><path d="M7 10.5 H10.5 V7" fill="none" stroke="#555" stroke-width="1"/></svg>
<svg style="left:601px;top:422.3px;" width="12" height="12" viewBox="0 0 12 12"><rect x="1" y="1" width="6.5" height="5" fill="none" stroke="#555" stroke-width="1"/><rect x="4.5" y="5" width="6.5" height="6" fill="#f8f8f8" stroke="#555" stroke-width="1"/><path d="M6 8 H9.5" stroke="#555" stroke-width="0.8"/></svg>
<svg style="left:601px;top:435.8px;" width="12" height="12" viewBox="0 0 12 12"><path d="M1.5 2.5 H10.5 M4.5 2.2 V1 H7.5 V2.2" stroke="#2b2b2b" stroke-width="1.2" fill="none"/><path d="M2.5 4 H9.5 L9 11.5 H3 Z" fill="#2b2b2b"/></svg>
<svg style="left:601px;top:454.6px;" width="12" height="12" viewBox="0 0 12 12"><ellipse cx="5.5" cy="7" rx="4.5" ry="3" fill="none" stroke="#333" stroke-width="0.9"/><circle cx="5.5" cy="7" r="1.7" fill="#222"/><path d="M8 1 L11 4 M11 1 L8 4" stroke="#d03a3a" stroke-width="0.9"/></svg>
<svg style="left:601px;top:468.0px;" width="12" height="12" viewBox="0 0 12 12"><path d="M4 5.5 V3 A2 2 0 0 1 8 3 V5.5" fill="none" stroke="#2b2b2b" stroke-width="1.2"/><rect x="2.5" y="5.5" width="7" height="5.5" fill="#2b2b2b"/></svg>
<div style="left:738px;top:321px;width:105px;height:86px;background:#ffffff;border:1px solid #c9c9c9;box-shadow:1px 1px 2px rgba(0,0,0,0.18);"></div>
<div style="left:739px;top:322px;width:18px;height:84px;background:#f8f8f8;"></div>
<div style="left:737px;top:362px;width:107px;height:19px;background:#daecf9;border:3px solid #e8333a;"></div>
<span class="t" style="left:758px;top:324.90px;font-size:7.6px;line-height:12px;color:#222;">线条图(<u>L</u>)...</span>
<span class="t" style="left:758px;top:338.30px;font-size:7.6px;line-height:12px;color:#222;">徽标(<u>O</u>)...</span>
<span class="t" style="left:758px;top:351.50px;font-size:7.6px;line-height:12px;color:#222;">详细徽标(<u>D</u>)...</span>
<span class="t" style="left:758px;top:365.70px;font-size:7.6px;line-height:12px;color:#222;">剪贴画(<u>C</u>)...</span>
<span class="t" style="left:758px;top:379.30px;font-size:7.6px;line-height:12px;color:#222;">低品质图像(<u>L</u>)...</span>
<span class="t" style="left:758px;top:392.70px;font-size:7.6px;line-height:12px;color:#222;">高质量图像(<u>H</u>)...</span>
<svg style="left:741px;top:324.2px;" width="12" height="12" viewBox="0 0 12 12"><path d="M1 2 L7 9" stroke="#222" stroke-width="2"/><path d="M7 9 L9 11" stroke="#222" stroke-width="1"/><path d="M7.5 4 L10.5 1" stroke="#8a8a8a" stroke-width="1"/><path d="M9 1 L11 3" stroke="#9a9a9a" stroke-width="0.6"/></svg>
<svg style="left:741px;top:337.6px;" width="12" height="12" viewBox="0 0 12 12"><path d="M4.5 2 A4 4 0 1 0 4.5 10 L5.5 6 Z" fill="#222"/><path d="M4.5 10 V11.5" stroke="#222" stroke-width="1"/><path d="M7.5 4 L10.5 1" stroke="#8a8a8a" stroke-width="1"/><path d="M9 1 L11 3" stroke="#9a9a9a" stroke-width="0.6"/></svg>
<svg style="left:741px;top:350.8px;" width="12" height="12" viewBox="0 0 12 12"><ellipse cx="4" cy="6" rx="2.2" ry="3.6" fill="#666" stroke="#333" stroke-width="0.6"/><path d="M4 9.5 V11.5" stroke="#333" stroke-width="0.9"/><path d="M7.5 4 L10.5 1" stroke="#8a8a8a" stroke-width="1"/><path d="M9 1 L11 3" stroke="#9a9a9a" stroke-width="0.6"/></svg>
<svg style="left:741px;top:365px;" width="12" height="12" viewBox="0 0 12 12"><path d="M2 6 Q2 3.5 4.5 3.5 Q6.5 3.5 6.5 5.5 V9.5 H2.5 Q1.5 8 2 6 Z" fill="none" stroke="#1d3f8f" stroke-width="1.1"/><circle cx="2" cy="9" r="1" fill="#1d3f8f"/><path d="M7.5 4 L10.5 1" stroke="#8a8a8a" stroke-width="1"/><path d="M9 1 L11 3" stroke="#9a9a9a" stroke-width="0.6"/></svg>
<svg style="left:741px;top:378.6px;" width="12" height="12" viewBox="0 0 12 12"><rect x="0.8" y="3" width="9" height="8" fill="none" stroke="#555" stroke-width="0.9"/><path d="M1.5 10.5 L4 7 L6 9 L7.5 7.5 L9.5 10.5 Z" fill="#888"/><path d="M7.5 4 L10.5 1" stroke="#8a8a8a" stroke-width="1"/><path d="M9 1 L11 3" stroke="#9a9a9a" stroke-width="0.6"/></svg>
<svg style="left:741px;top:392px;" width="12" height="12" viewBox="0 0 12 12"><rect x="0.8" y="3" width="9" height="8" fill="none" stroke="#222" stroke-width="1"/><path d="M1 10.8 L4 6.5 L6 8.8 L7.5 7.3 L9.6 10.8 Z" fill="#111"/><path d="M7.5 4 L10.5 1" stroke="#8a8a8a" stroke-width="1"/><path d="M9 1 L11 3" stroke="#9a9a9a" stroke-width="0.6"/></svg>
</div></body></html>
